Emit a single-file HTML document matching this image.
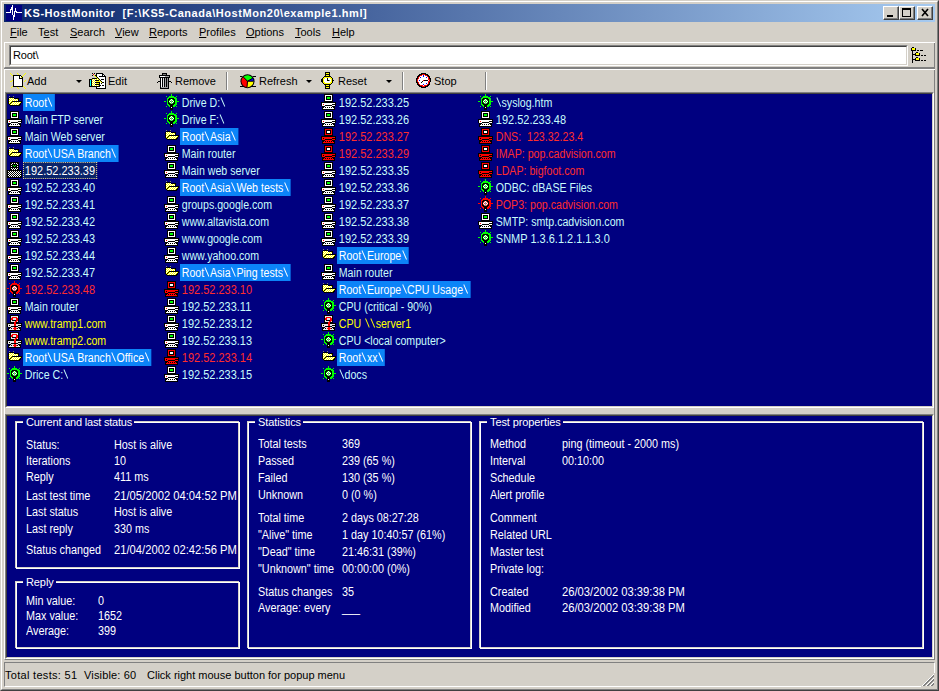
<!DOCTYPE html>
<html><head><meta charset="utf-8"><style>
*{margin:0;padding:0;box-sizing:border-box}
html,body{width:939px;height:691px;overflow:hidden;background:#D4D0C8;font-family:"Liberation Sans",sans-serif;font-size:11px;}
div{position:absolute}
svg{display:block}
.title{left:4px;top:4px;width:931px;height:18px;background:linear-gradient(to right,#0A246A,#A6CAF0)}
.ttext{left:24px;top:4px;height:18px;line-height:18px;color:#fff;font-weight:bold;font-size:11px;letter-spacing:0.55px;white-space:pre}
.cb{top:6px;width:16px;height:14px;background:#D4D0C8;border-top:1px solid #fff;border-left:1px solid #fff;border-right:1px solid #404040;border-bottom:1px solid #404040;box-shadow:inset -1px -1px 0 #808080}
.mi{top:23px;height:19px;line-height:19px;color:#000;white-space:pre;letter-spacing:0px}
.mi u{text-decoration:underline;text-underline-offset:1px}
.it{height:17px;line-height:18px;padding:0 2px;color:#C8FCFC;white-space:pre;letter-spacing:0px;font-size:12px;transform:scaleX(0.885);transform-origin:0 0}
.it svg.bs{display:inline;vertical-align:baseline}
.it.ip{transform:scaleX(0.915)}
.it.sel{background:#0C84F8;color:#fff}
.it.foc{color:#fff;background:#0A246A;outline:1px dotted #F0D898;outline-offset:-1px}
.it.red{color:#FF2C2C}
.it.yel{color:#FFFF00}
.gb1{border:1px solid #D4D0C8}
.gb2{border:1px solid #fff}
.gbt{background:#000080;color:#fff;padding:0 2px 0 3px;height:13px;line-height:13px;white-space:pre;letter-spacing:-0.1px}
.lt{color:#fff;white-space:pre;height:13px;line-height:14px;letter-spacing:0px;font-size:12px;transform:scaleX(0.9);transform-origin:0 0}
.lt.dt{transform:scaleX(0.935)}
.tb{top:70px;height:22px;line-height:22px;color:#000;white-space:pre;letter-spacing:0px}
.sep{top:72px;width:2px;height:18px;border-left:1px solid #808080;border-right:1px solid #fff}
.arr{top:80px;width:0;height:0;border-left:3px solid transparent;border-right:3px solid transparent;border-top:3px solid #000}
</style></head><body>
<div style="left:0;top:0;width:939px;height:691px;border-top:1px solid #D4D0C8;border-left:1px solid #D4D0C8;border-right:1px solid #404040;border-bottom:1px solid #404040"></div>
<div style="left:1px;top:1px;width:937px;height:689px;border-top:1px solid #fff;border-left:1px solid #fff;border-right:1px solid #808080;border-bottom:1px solid #808080"></div>
<div class="title"></div>
<div style="left:6px;top:5px"><svg width="16" height="16" viewBox="0 0 16 16" shape-rendering="crispEdges" style="display:block"><rect x="0" y="0" width="16" height="16" fill="#000080"/><rect x="0" y="7" width="5" height="1" fill="#FFF"/><rect x="4" y="4" width="1" height="4" fill="#FFF"/><rect x="5" y="2" width="1" height="3" fill="#FFF"/><rect x="6" y="0" width="1" height="10" fill="#FFF"/><rect x="7" y="10" width="1" height="5" fill="#FFF"/><rect x="8" y="6" width="1" height="6" fill="#FFF"/><rect x="9" y="3" width="1" height="4" fill="#FFF"/><rect x="10" y="6" width="1" height="2" fill="#FFF"/><rect x="11" y="7" width="5" height="1" fill="#FFF"/></svg></div>
<div class="ttext">KS-HostMonitor  [F:\KS5-Canada\HostMon20\example1.hml]</div>
<div class="cb" style="left:883px"><svg width="14" height="12" viewBox="0 0 14 12" shape-rendering="crispEdges" ><rect x="3" y="8" width="6" height="2" fill="#000"/></svg></div>
<div class="cb" style="left:899px"><svg width="14" height="12" viewBox="0 0 14 12" shape-rendering="crispEdges" ><rect x="2" y="1" width="9" height="9" fill="#000"/><rect x="3" y="3" width="7" height="6" fill="#D4D0C8"/></svg></div>
<div class="cb" style="left:917px"><svg width="14" height="12" viewBox="0 0 14 12" shape-rendering="crispEdges" ><path d="M4 2L10 9M10 2L4 9" stroke="#000" stroke-width="1.6" shape-rendering="auto"/></svg></div>
<div class="mi" style="left:10px"><u>F</u>ile</div><div class="mi" style="left:38px">T<u>e</u>st</div><div class="mi" style="left:70px"><u>S</u>earch</div><div class="mi" style="left:115px"><u>V</u>iew</div><div class="mi" style="left:149px"><u>R</u>eports</div><div class="mi" style="left:199px"><u>P</u>rofiles</div><div class="mi" style="left:246px"><u>O</u>ptions</div><div class="mi" style="left:295px"><u>T</u>ools</div><div class="mi" style="left:332px"><u>H</u>elp</div>
<div style="left:4px;top:42px;width:931px;height:618px;border-top:1px solid #fff;border-left:1px solid #fff;border-right:1px solid #808080;border-bottom:1px solid #808080"></div>
<!-- address band -->
<div style="left:4px;top:42px;width:931px;height:26px;border-top:1px solid #fff;border-left:1px solid #fff;border-bottom:1px solid #808080"></div>
<div style="left:9px;top:45px;width:899px;height:21px;border-top:1px solid #808080;border-left:1px solid #808080;border-right:1px solid #fff;border-bottom:1px solid #fff;background:#fff"></div>
<div style="left:10px;top:46px;width:897px;height:19px;border-top:1px solid #404040;border-left:1px solid #404040;border-right:1px solid #D4D0C8;border-bottom:1px solid #D4D0C8;background:#fff"></div>
<div style="left:13px;top:47px;height:17px;line-height:17px;color:#000;letter-spacing:-0.2px">Root\</div>
<div style="left:905px;top:44px"><svg width="24" height="24" viewBox="0 0 24 24" shape-rendering="crispEdges" style="display:block"><rect x="7" y="6" width="1" height="13" fill="#000"/><rect x="6" y="4" width="5" height="3" fill="#000"/><rect x="7" y="3" width="2" height="1" fill="#000"/><rect x="7" y="4" width="3" height="2" fill="#FFFF00"/><rect x="10" y="9" width="5" height="3" fill="#000"/><rect x="11" y="8" width="2" height="1" fill="#000"/><rect x="11" y="9" width="3" height="2" fill="#FFFF00"/><rect x="10" y="14" width="5" height="3" fill="#000"/><rect x="11" y="13" width="2" height="1" fill="#000"/><rect x="11" y="14" width="3" height="2" fill="#FFFF00"/><rect x="7" y="10" width="3" height="1" fill="#000"/><rect x="7" y="15" width="3" height="1" fill="#000"/><rect x="12" y="6" width="2" height="1" fill="#000"/><rect x="15" y="6" width="3" height="1" fill="#000"/><rect x="16" y="11" width="2" height="1" fill="#000"/><rect x="19" y="11" width="2" height="1" fill="#000"/><rect x="16" y="16" width="2" height="1" fill="#000"/><rect x="19" y="16" width="2" height="1" fill="#000"/></svg></div>
<!-- toolbar band -->
<div style="left:4px;top:68px;width:931px;height:1px;background:#808080"></div>
<div style="left:4px;top:69px;width:931px;height:23px;border-top:1px solid #fff;border-left:1px solid #fff"></div>
<div style="left:8px;top:70px"><svg width="20" height="20" viewBox="0 0 20 20" shape-rendering="crispEdges" style="display:block"><rect x="5" y="5" width="7" height="1" fill="#000"/><rect x="5" y="5" width="1" height="12" fill="#000"/><rect x="5" y="16" width="10" height="1" fill="#000"/><rect x="14" y="9" width="1" height="8" fill="#000"/><rect x="6" y="6" width="5" height="10" fill="#FFF"/><rect x="11" y="9" width="3" height="7" fill="#FFF"/><rect x="12" y="5" width="1" height="1" fill="#000"/><rect x="13" y="6" width="1" height="1" fill="#000"/><rect x="14" y="7" width="1" height="1" fill="#000"/><rect x="14" y="8" width="1" height="1" fill="#000"/><rect x="11" y="5" width="1" height="4" fill="#000"/><rect x="11" y="8" width="3" height="1" fill="#000"/><rect x="12" y="6" width="1" height="1" fill="#FFF"/><rect x="12" y="7" width="1" height="1" fill="#FFF"/><rect x="13" y="7" width="1" height="1" fill="#FFF"/><rect x="2" y="3" width="1" height="1" fill="#FFFF00"/><rect x="3" y="4" width="1" height="1" fill="#FFFF00"/><rect x="4" y="5" width="1" height="1" fill="#FFFF00"/><rect x="9" y="3" width="1" height="1" fill="#FFFF00"/><rect x="10" y="4" width="1" height="1" fill="#FFFF00"/><rect x="17" y="3" width="1" height="1" fill="#FFFF00"/><rect x="16" y="4" width="1" height="1" fill="#FFFF00"/><rect x="15" y="5" width="1" height="1" fill="#FFFF00"/><rect x="14" y="6" width="1" height="1" fill="#FFFF00"/><rect x="13" y="7" width="1" height="1" fill="#FFFF00"/><rect x="2" y="11" width="1" height="1" fill="#FFFF00"/><rect x="3" y="11" width="1" height="1" fill="#FFFF00"/><rect x="4" y="10" width="1" height="1" fill="#FFFF00"/><rect x="16" y="11" width="1" height="1" fill="#FFFF00"/><rect x="17" y="10" width="1" height="1" fill="#FFFF00"/><rect x="3" y="17" width="1" height="1" fill="#FFFF00"/><rect x="4" y="16" width="1" height="1" fill="#FFFF00"/><rect x="9" y="17" width="1" height="1" fill="#FFFF00"/><rect x="10" y="18" width="1" height="1" fill="#FFFF00"/><rect x="15" y="16" width="1" height="1" fill="#FFFF00"/><rect x="16" y="17" width="1" height="1" fill="#FFFF00"/><rect x="17" y="18" width="1" height="1" fill="#FFFF00"/></svg></div>
<div class="tb" style="left:27px">Add</div>
<div class="arr" style="left:76px"></div>
<div style="left:88px;top:70px"><svg width="20" height="20" viewBox="0 0 20 20" shape-rendering="crispEdges" style="display:block"><rect x="8" y="3" width="7" height="1" fill="#000"/><rect x="8" y="3" width="1" height="16" fill="#000"/><rect x="8" y="18" width="10" height="1" fill="#000"/><rect x="17" y="6" width="1" height="13" fill="#000"/><rect x="9" y="4" width="5" height="14" fill="#FFF"/><rect x="14" y="7" width="3" height="11" fill="#FFF"/><rect x="14" y="3" width="1" height="4" fill="#000"/><rect x="14" y="6" width="4" height="1" fill="#000"/><rect x="15" y="4" width="1" height="1" fill="#000"/><rect x="16" y="5" width="1" height="1" fill="#000"/><rect x="15" y="5" width="1" height="1" fill="#FFF"/><rect x="11" y="6" width="3" height="1" fill="#000"/><rect x="13" y="9" width="3" height="1" fill="#000"/><rect x="14" y="12" width="2" height="1" fill="#000"/><rect x="12" y="15" width="1" height="1" fill="#000"/><rect x="14" y="15" width="2" height="1" fill="#000"/><rect x="1" y="9" width="3" height="8" fill="#000"/><rect x="2" y="10" width="1" height="6" fill="#00FFFF"/><rect x="4" y="8" width="4" height="1" fill="#000"/><rect x="4" y="9" width="8" height="8" fill="#000"/><rect x="4" y="9" width="1" height="1" fill="#FFFF00"/><rect x="5" y="9" width="1" height="1" fill="#FFF"/><rect x="6" y="9" width="1" height="1" fill="#FFFF00"/><rect x="7" y="9" width="1" height="1" fill="#FFF"/><rect x="8" y="9" width="1" height="1" fill="#FFFF00"/><rect x="9" y="9" width="1" height="1" fill="#FFF"/><rect x="10" y="9" width="1" height="1" fill="#FFFF00"/><rect x="4" y="10" width="1" height="1" fill="#FFF"/><rect x="5" y="10" width="1" height="1" fill="#FFFF00"/><rect x="6" y="10" width="1" height="1" fill="#FFF"/><rect x="4" y="11" width="1" height="1" fill="#FFFF00"/><rect x="5" y="11" width="1" height="1" fill="#FFF"/><rect x="6" y="11" width="1" height="1" fill="#FFFF00"/><rect x="7" y="11" width="1" height="1" fill="#FFF"/><rect x="8" y="11" width="1" height="1" fill="#FFFF00"/><rect x="9" y="11" width="1" height="1" fill="#FFF"/><rect x="10" y="11" width="1" height="1" fill="#FFFF00"/><rect x="4" y="12" width="1" height="1" fill="#FFF"/><rect x="5" y="12" width="1" height="1" fill="#FFFF00"/><rect x="6" y="12" width="1" height="1" fill="#FFF"/><rect x="4" y="13" width="1" height="1" fill="#FFFF00"/><rect x="5" y="13" width="1" height="1" fill="#FFF"/><rect x="6" y="13" width="1" height="1" fill="#FFFF00"/><rect x="7" y="13" width="1" height="1" fill="#FFF"/><rect x="8" y="13" width="1" height="1" fill="#FFFF00"/><rect x="9" y="13" width="1" height="1" fill="#FFF"/><rect x="10" y="13" width="1" height="1" fill="#FFFF00"/><rect x="4" y="14" width="1" height="1" fill="#FFF"/><rect x="5" y="14" width="1" height="1" fill="#FFFF00"/><rect x="6" y="14" width="1" height="1" fill="#FFF"/><rect x="4" y="15" width="1" height="1" fill="#FFFF00"/><rect x="5" y="15" width="1" height="1" fill="#FFF"/><rect x="6" y="15" width="1" height="1" fill="#FFFF00"/><rect x="7" y="15" width="1" height="1" fill="#FFF"/><rect x="8" y="15" width="1" height="1" fill="#FFFF00"/><rect x="9" y="15" width="1" height="1" fill="#FFF"/><rect x="10" y="15" width="1" height="1" fill="#FFFF00"/><rect x="8" y="11" width="1" height="1" fill="#FFFF00"/><rect x="9" y="11" width="1" height="1" fill="#FFFF00"/><rect x="10" y="11" width="1" height="1" fill="#FFFF00"/><rect x="11" y="11" width="1" height="1" fill="#FFFF00"/><rect x="8" y="13" width="1" height="1" fill="#FFFF00"/><rect x="9" y="13" width="1" height="1" fill="#FFFF00"/><rect x="10" y="13" width="1" height="1" fill="#FFFF00"/><rect x="4" y="3" width="1" height="1" fill="#000"/><rect x="6" y="3" width="1" height="1" fill="#000"/><rect x="4" y="5" width="1" height="1" fill="#000"/><rect x="5" y="4" width="1" height="1" fill="#FF0000"/><rect x="6" y="5" width="1" height="1" fill="#FFFF00"/><rect x="7" y="6" width="1" height="1" fill="#FFFF00"/><rect x="8" y="7" width="1" height="1" fill="#FFFF00"/><rect x="9" y="8" width="1" height="1" fill="#FFFF00"/><rect x="10" y="9" width="1" height="1" fill="#FFFF00"/><rect x="11" y="10" width="1" height="1" fill="#FFFF00"/><rect x="12" y="11" width="1" height="1" fill="#FFFF00"/><rect x="13" y="12" width="1" height="1" fill="#FFFF00"/><rect x="7" y="5" width="1" height="1" fill="#000"/><rect x="8" y="6" width="1" height="1" fill="#000"/><rect x="9" y="7" width="1" height="1" fill="#000"/><rect x="10" y="8" width="1" height="1" fill="#000"/><rect x="11" y="9" width="1" height="1" fill="#000"/><rect x="12" y="10" width="1" height="1" fill="#000"/><rect x="13" y="11" width="1" height="1" fill="#000"/><rect x="14" y="12" width="1" height="1" fill="#000"/><rect x="13" y="13" width="1" height="1" fill="#000"/></svg></div>
<div class="tb" style="left:108px">Edit</div>
<div style="left:155px;top:70px"><svg width="20" height="20" viewBox="0 0 20 20" shape-rendering="crispEdges" style="display:block"><rect x="7" y="3" width="5" height="3" fill="#000"/><rect x="8" y="4" width="3" height="1" fill="#808080"/><rect x="4" y="5" width="11" height="3" fill="#000"/><rect x="5" y="6" width="5" height="1" fill="#FFF"/><rect x="10" y="6" width="4" height="1" fill="#A0A0A0"/><rect x="5" y="8" width="9" height="11" fill="#000"/><rect x="6" y="8" width="1" height="9" fill="#FFF"/><rect x="8" y="8" width="1" height="9" fill="#E0E0E0"/><rect x="10" y="8" width="1" height="9" fill="#A0A0A0"/><rect x="12" y="8" width="1" height="9" fill="#909090"/><rect x="6" y="17" width="7" height="1" fill="#A0A0A0"/><rect x="3" y="11" width="2" height="1" fill="#000"/><rect x="14" y="11" width="2" height="1" fill="#000"/><rect x="2" y="12" width="1" height="1" fill="#000"/><rect x="16" y="12" width="1" height="1" fill="#000"/></svg></div>
<div class="tb" style="left:175px">Remove</div>
<div class="sep" style="left:226px"></div>
<div style="left:238px;top:70px"><svg width="20" height="20" viewBox="0 0 20 20" shape-rendering="crispEdges" style="display:block"><g shape-rendering="auto"><circle cx="9.5" cy="11.2" r="7.0" fill="#000"/><path d="M9.5 11.2L5.26 6.96A6.0 6.0 0 0 1 14.70 8.20Z" fill="#00FF00"/><path d="M9.5 11.2L14.70 8.20A6.0 6.0 0 0 1 15.50 11.20Z" fill="#0000FF"/><path d="M9.5 11.2L15.50 11.20A6.0 6.0 0 0 1 8.98 17.18Z" fill="#FFFF00"/><path d="M9.5 11.2L8.98 17.18A6.0 6.0 0 0 1 5.26 6.96Z" fill="#FF0000"/><path d="M9.5 11.2L5.26 6.96M9.5 11.2L14.70 8.20M9.5 11.2L15.5 11.2M9.5 11.2L8.98 17.18" stroke="#000" stroke-width="1"/></g><rect x="2" y="6" width="2" height="1" fill="#000"/><rect x="15" y="6" width="3" height="1" fill="#000"/><rect x="2" y="16" width="3" height="1" fill="#000"/><rect x="14" y="16" width="4" height="1" fill="#000"/></svg></div>
<div class="tb" style="left:259px">Refresh</div>
<div class="arr" style="left:306px"></div>
<div style="left:318px;top:70px"><svg width="20" height="20" viewBox="0 0 20 20" shape-rendering="crispEdges" style="display:block"><rect x="7" y="2" width="5" height="5" fill="#000"/><rect x="8" y="3" width="3" height="1" fill="#FFFF00"/><rect x="8" y="5" width="3" height="1" fill="#FFFF00"/><rect x="7" y="14" width="5" height="5" fill="#000"/><rect x="8" y="15" width="3" height="1" fill="#FFFF00"/><rect x="8" y="17" width="3" height="1" fill="#FFFF00"/><rect x="6" y="6" width="7" height="1" fill="#000"/><rect x="5" y="7" width="9" height="1" fill="#000"/><rect x="4" y="8" width="11" height="5" fill="#000"/><rect x="5" y="13" width="9" height="1" fill="#000"/><rect x="6" y="14" width="7" height="1" fill="#000"/><rect x="6" y="7" width="7" height="1" fill="#FFFF00"/><rect x="5" y="8" width="9" height="5" fill="#FFFF00"/><rect x="6" y="13" width="7" height="1" fill="#FFFF00"/><rect x="7" y="8" width="5" height="5" fill="#FFF"/><rect x="6" y="9" width="7" height="3" fill="#FFF"/><rect x="9" y="8" width="1" height="3" fill="#000"/><rect x="10" y="10" width="1" height="1" fill="#000"/><rect x="11" y="10" width="1" height="1" fill="#808080"/><rect x="14" y="10" width="2" height="1" fill="#000"/><rect x="3" y="9" width="1" height="3" fill="#000"/></svg></div>
<div class="tb" style="left:338px">Reset</div>
<div class="arr" style="left:386px"></div>
<div class="sep" style="left:402px"></div>
<div style="left:413px;top:70px"><svg width="20" height="20" viewBox="0 0 20 20" shape-rendering="crispEdges" style="display:block"><circle cx="10.5" cy="10.5" r="7.4" fill="#000"/><circle cx="10.5" cy="10.5" r="6.3" fill="#FF0000"/><circle cx="10.5" cy="10.5" r="5.2" fill="#FFF"/><rect x="10" y="5" width="1" height="2" fill="#0000FF"/><rect x="13" y="7" width="1" height="1" fill="#0000FF"/><rect x="7" y="7" width="1" height="1" fill="#0000FF"/><rect x="6" y="10" width="1" height="1" fill="#0000FF"/><rect x="10" y="14" width="1" height="1" fill="#0000FF"/><rect x="13" y="13" width="1" height="1" fill="#0000FF"/><rect x="11" y="10" width="4" height="1" fill="#000"/><rect x="10" y="10" width="1" height="1" fill="#FF0000"/><rect x="9" y="11" width="1" height="1" fill="#000"/><rect x="8" y="12" width="1" height="1" fill="#000"/></svg></div>
<div class="tb" style="left:434px">Stop</div>
<div class="sep" style="left:485px"></div>
<!-- main list -->
<div style="left:5px;top:92px;width:929px;height:316px;border-top:1px solid #808080;border-left:1px solid #808080;border-right:1px solid #fff;border-bottom:1px solid #fff"></div>
<div style="left:6px;top:93px;width:927px;height:314px;border-top:1px solid #404040;border-left:1px solid #404040;border-right:1px solid #D4D0C8;border-bottom:1px solid #D4D0C8;background:#000080"></div>
<div class="ic" style="left:7px;top:94px"><svg width="16" height="16" viewBox="0 0 16 16" shape-rendering="crispEdges" ><rect x="2" y="2" width="1" height="1" fill="#808080"/><rect x="6" y="2" width="1" height="1" fill="#808080"/><rect x="2" y="3" width="5" height="1" fill="#000"/><rect x="1" y="4" width="11" height="1" fill="#000"/><rect x="1" y="5" width="11" height="1" fill="#000"/><rect x="1" y="6" width="11" height="1" fill="#000"/><rect x="1" y="7" width="14" height="1" fill="#000"/><rect x="1" y="8" width="14" height="1" fill="#000"/><rect x="1" y="9" width="13" height="1" fill="#000"/><rect x="2" y="10" width="12" height="1" fill="#000"/><rect x="3" y="11" width="10" height="1" fill="#000"/><rect x="2" y="4" width="1" height="1" fill="#FFFFFF"/><rect x="3" y="4" width="1" height="1" fill="#FFFF00"/><rect x="4" y="4" width="1" height="1" fill="#FFFFFF"/><rect x="5" y="4" width="1" height="1" fill="#FFFF00"/><rect x="6" y="4" width="1" height="1" fill="#FFFFFF"/><rect x="2" y="5" width="1" height="1" fill="#FFFF00"/><rect x="3" y="5" width="1" height="1" fill="#FFFFFF"/><rect x="4" y="5" width="1" height="1" fill="#FFFF00"/><rect x="5" y="5" width="1" height="1" fill="#FFFFFF"/><rect x="6" y="5" width="1" height="1" fill="#FFFF00"/><rect x="7" y="5" width="1" height="1" fill="#FFFFFF"/><rect x="8" y="5" width="1" height="1" fill="#FFFF00"/><rect x="9" y="5" width="1" height="1" fill="#FFFFFF"/><rect x="10" y="5" width="1" height="1" fill="#FFFF00"/><rect x="2" y="6" width="1" height="1" fill="#FFFFFF"/><rect x="3" y="6" width="1" height="1" fill="#FFFF00"/><rect x="4" y="6" width="1" height="1" fill="#FFFFFF"/><rect x="5" y="6" width="1" height="1" fill="#FFFF00"/><rect x="6" y="6" width="1" height="1" fill="#FFFFFF"/><rect x="7" y="6" width="1" height="1" fill="#FFFF00"/><rect x="8" y="6" width="1" height="1" fill="#FFFFFF"/><rect x="9" y="6" width="1" height="1" fill="#FFFF00"/><rect x="10" y="6" width="1" height="1" fill="#FFFFFF"/><rect x="2" y="7" width="1" height="1" fill="#FFFF00"/><rect x="3" y="7" width="1" height="1" fill="#FFFFFF"/><rect x="4" y="7" width="1" height="1" fill="#FFFF00"/><rect x="2" y="8" width="1" height="1" fill="#FFFFFF"/><rect x="3" y="8" width="1" height="1" fill="#FFFF00"/><rect x="2" y="9" width="1" height="1" fill="#FFFF00"/><rect x="5" y="8" width="1" height="1" fill="#FFFF00"/><rect x="6" y="8" width="1" height="1" fill="#FFFFFF"/><rect x="7" y="8" width="1" height="1" fill="#FFFF00"/><rect x="8" y="8" width="1" height="1" fill="#FFFFFF"/><rect x="9" y="8" width="1" height="1" fill="#FFFF00"/><rect x="10" y="8" width="1" height="1" fill="#FFFFFF"/><rect x="11" y="8" width="1" height="1" fill="#FFFF00"/><rect x="12" y="8" width="1" height="1" fill="#FFFFFF"/><rect x="13" y="8" width="1" height="1" fill="#FFFF00"/><rect x="4" y="9" width="1" height="1" fill="#FFFF00"/><rect x="5" y="9" width="1" height="1" fill="#FFFFFF"/><rect x="6" y="9" width="1" height="1" fill="#FFFF00"/><rect x="7" y="9" width="1" height="1" fill="#FFFFFF"/><rect x="8" y="9" width="1" height="1" fill="#FFFF00"/><rect x="9" y="9" width="1" height="1" fill="#FFFFFF"/><rect x="10" y="9" width="1" height="1" fill="#FFFF00"/><rect x="11" y="9" width="1" height="1" fill="#FFFFFF"/><rect x="12" y="9" width="1" height="1" fill="#FFFF00"/><rect x="3" y="10" width="1" height="1" fill="#FFFF00"/><rect x="4" y="10" width="1" height="1" fill="#FFFFFF"/><rect x="5" y="10" width="1" height="1" fill="#FFFF00"/><rect x="6" y="10" width="1" height="1" fill="#FFFFFF"/><rect x="7" y="10" width="1" height="1" fill="#FFFF00"/><rect x="8" y="10" width="1" height="1" fill="#FFFFFF"/><rect x="9" y="10" width="1" height="1" fill="#FFFF00"/><rect x="10" y="10" width="1" height="1" fill="#FFFFFF"/><rect x="11" y="10" width="1" height="1" fill="#FFFF00"/></svg></div><div class="it sel" style="left:23px;top:94px">Root<svg class="bs" width="6.5" height="10" viewBox="0 0 6.5 10"><path d="M1.2 0.6L5.6 9.4" stroke="currentColor" stroke-width="1.05" fill="none"/></svg></div><div class="ic" style="left:7px;top:111px"><svg width="16" height="16" viewBox="0 0 16 16" shape-rendering="crispEdges" ><rect x="3" y="0" width="9" height="9" fill="#000"/><rect x="4" y="1" width="7" height="6" fill="#FFFFFF"/><rect x="5" y="2" width="5" height="4" fill="#000"/><rect x="6" y="3" width="3" height="2" fill="#00FF00"/><rect x="0" y="8" width="15" height="4" fill="#000"/><rect x="1" y="12" width="13" height="4" fill="#000"/><rect x="1" y="9" width="13" height="3" fill="#FFFFFF"/><rect x="4" y="11" width="7" height="1" fill="#000"/><rect x="11" y="10" width="3" height="1" fill="#000"/><rect x="2" y="10" width="1" height="1" fill="#F00"/><rect x="4" y="12" width="7" height="1" fill="#FFFFFF"/><rect x="3" y="13" width="9" height="1" fill="#FFFFFF"/><rect x="2" y="14" width="11" height="1" fill="#FFFFFF"/><rect x="4" y="13" width="1" height="1" fill="#000"/><rect x="6" y="13" width="1" height="1" fill="#000"/><rect x="8" y="13" width="1" height="1" fill="#000"/><rect x="10" y="13" width="1" height="1" fill="#000"/></svg></div><div class="it" style="left:23px;top:111px">Main FTP server</div><div class="ic" style="left:7px;top:128px"><svg width="16" height="16" viewBox="0 0 16 16" shape-rendering="crispEdges" ><rect x="3" y="0" width="9" height="9" fill="#000"/><rect x="4" y="1" width="7" height="6" fill="#FFFFFF"/><rect x="5" y="2" width="5" height="4" fill="#000"/><rect x="6" y="3" width="3" height="2" fill="#00FF00"/><rect x="0" y="8" width="15" height="4" fill="#000"/><rect x="1" y="12" width="13" height="4" fill="#000"/><rect x="1" y="9" width="13" height="3" fill="#FFFFFF"/><rect x="4" y="11" width="7" height="1" fill="#000"/><rect x="11" y="10" width="3" height="1" fill="#000"/><rect x="2" y="10" width="1" height="1" fill="#F00"/><rect x="4" y="12" width="7" height="1" fill="#FFFFFF"/><rect x="3" y="13" width="9" height="1" fill="#FFFFFF"/><rect x="2" y="14" width="11" height="1" fill="#FFFFFF"/><rect x="4" y="13" width="1" height="1" fill="#000"/><rect x="6" y="13" width="1" height="1" fill="#000"/><rect x="8" y="13" width="1" height="1" fill="#000"/><rect x="10" y="13" width="1" height="1" fill="#000"/></svg></div><div class="it" style="left:23px;top:128px">Main Web server</div><div class="ic" style="left:7px;top:145px"><svg width="16" height="16" viewBox="0 0 16 16" shape-rendering="crispEdges" ><rect x="2" y="2" width="1" height="1" fill="#808080"/><rect x="6" y="2" width="1" height="1" fill="#808080"/><rect x="2" y="3" width="5" height="1" fill="#000"/><rect x="1" y="4" width="11" height="1" fill="#000"/><rect x="1" y="5" width="11" height="1" fill="#000"/><rect x="1" y="6" width="11" height="1" fill="#000"/><rect x="1" y="7" width="14" height="1" fill="#000"/><rect x="1" y="8" width="14" height="1" fill="#000"/><rect x="1" y="9" width="13" height="1" fill="#000"/><rect x="2" y="10" width="12" height="1" fill="#000"/><rect x="3" y="11" width="10" height="1" fill="#000"/><rect x="2" y="4" width="1" height="1" fill="#FFFFFF"/><rect x="3" y="4" width="1" height="1" fill="#FFFF00"/><rect x="4" y="4" width="1" height="1" fill="#FFFFFF"/><rect x="5" y="4" width="1" height="1" fill="#FFFF00"/><rect x="6" y="4" width="1" height="1" fill="#FFFFFF"/><rect x="2" y="5" width="1" height="1" fill="#FFFF00"/><rect x="3" y="5" width="1" height="1" fill="#FFFFFF"/><rect x="4" y="5" width="1" height="1" fill="#FFFF00"/><rect x="5" y="5" width="1" height="1" fill="#FFFFFF"/><rect x="6" y="5" width="1" height="1" fill="#FFFF00"/><rect x="7" y="5" width="1" height="1" fill="#FFFFFF"/><rect x="8" y="5" width="1" height="1" fill="#FFFF00"/><rect x="9" y="5" width="1" height="1" fill="#FFFFFF"/><rect x="10" y="5" width="1" height="1" fill="#FFFF00"/><rect x="2" y="6" width="1" height="1" fill="#FFFFFF"/><rect x="3" y="6" width="1" height="1" fill="#FFFF00"/><rect x="4" y="6" width="1" height="1" fill="#FFFFFF"/><rect x="5" y="6" width="1" height="1" fill="#FFFF00"/><rect x="6" y="6" width="1" height="1" fill="#FFFFFF"/><rect x="7" y="6" width="1" height="1" fill="#FFFF00"/><rect x="8" y="6" width="1" height="1" fill="#FFFFFF"/><rect x="9" y="6" width="1" height="1" fill="#FFFF00"/><rect x="10" y="6" width="1" height="1" fill="#FFFFFF"/><rect x="2" y="7" width="1" height="1" fill="#FFFF00"/><rect x="3" y="7" width="1" height="1" fill="#FFFFFF"/><rect x="4" y="7" width="1" height="1" fill="#FFFF00"/><rect x="2" y="8" width="1" height="1" fill="#FFFFFF"/><rect x="3" y="8" width="1" height="1" fill="#FFFF00"/><rect x="2" y="9" width="1" height="1" fill="#FFFF00"/><rect x="5" y="8" width="1" height="1" fill="#FFFF00"/><rect x="6" y="8" width="1" height="1" fill="#FFFFFF"/><rect x="7" y="8" width="1" height="1" fill="#FFFF00"/><rect x="8" y="8" width="1" height="1" fill="#FFFFFF"/><rect x="9" y="8" width="1" height="1" fill="#FFFF00"/><rect x="10" y="8" width="1" height="1" fill="#FFFFFF"/><rect x="11" y="8" width="1" height="1" fill="#FFFF00"/><rect x="12" y="8" width="1" height="1" fill="#FFFFFF"/><rect x="13" y="8" width="1" height="1" fill="#FFFF00"/><rect x="4" y="9" width="1" height="1" fill="#FFFF00"/><rect x="5" y="9" width="1" height="1" fill="#FFFFFF"/><rect x="6" y="9" width="1" height="1" fill="#FFFF00"/><rect x="7" y="9" width="1" height="1" fill="#FFFFFF"/><rect x="8" y="9" width="1" height="1" fill="#FFFF00"/><rect x="9" y="9" width="1" height="1" fill="#FFFFFF"/><rect x="10" y="9" width="1" height="1" fill="#FFFF00"/><rect x="11" y="9" width="1" height="1" fill="#FFFFFF"/><rect x="12" y="9" width="1" height="1" fill="#FFFF00"/><rect x="3" y="10" width="1" height="1" fill="#FFFF00"/><rect x="4" y="10" width="1" height="1" fill="#FFFFFF"/><rect x="5" y="10" width="1" height="1" fill="#FFFF00"/><rect x="6" y="10" width="1" height="1" fill="#FFFFFF"/><rect x="7" y="10" width="1" height="1" fill="#FFFF00"/><rect x="8" y="10" width="1" height="1" fill="#FFFFFF"/><rect x="9" y="10" width="1" height="1" fill="#FFFF00"/><rect x="10" y="10" width="1" height="1" fill="#FFFFFF"/><rect x="11" y="10" width="1" height="1" fill="#FFFF00"/></svg></div><div class="it sel" style="left:23px;top:145px">Root<svg class="bs" width="6.5" height="10" viewBox="0 0 6.5 10"><path d="M1.2 0.6L5.6 9.4" stroke="currentColor" stroke-width="1.05" fill="none"/></svg>USA Branch<svg class="bs" width="6.5" height="10" viewBox="0 0 6.5 10"><path d="M1.2 0.6L5.6 9.4" stroke="currentColor" stroke-width="1.05" fill="none"/></svg></div><div class="ic" style="left:7px;top:162px"><svg width="16" height="16" viewBox="0 0 16 16" shape-rendering="crispEdges" ><rect x="3" y="0" width="9" height="8" fill="#000"/><rect x="0" y="8" width="15" height="8" fill="#000"/><rect x="5" y="1" width="1" height="1" fill="#FFF"/><rect x="7" y="1" width="1" height="1" fill="#FFF"/><rect x="9" y="1" width="1" height="1" fill="#FFF"/><rect x="4" y="2" width="1" height="1" fill="#FFF"/><rect x="10" y="2" width="1" height="1" fill="#FFF"/><rect x="4" y="4" width="1" height="1" fill="#FFF"/><rect x="10" y="4" width="1" height="1" fill="#FFF"/><rect x="4" y="6" width="1" height="1" fill="#FFF"/><rect x="6" y="6" width="1" height="1" fill="#FFF"/><rect x="8" y="6" width="1" height="1" fill="#FFF"/><rect x="10" y="6" width="1" height="1" fill="#FFF"/><rect x="5" y="7" width="1" height="1" fill="#FFF"/><rect x="7" y="7" width="1" height="1" fill="#FFF"/><rect x="9" y="7" width="1" height="1" fill="#FFF"/><rect x="1" y="9" width="1" height="1" fill="#FFF"/><rect x="3" y="9" width="1" height="1" fill="#FFF"/><rect x="5" y="9" width="1" height="1" fill="#FFF"/><rect x="7" y="9" width="1" height="1" fill="#FFF"/><rect x="9" y="9" width="1" height="1" fill="#FFF"/><rect x="11" y="9" width="1" height="1" fill="#FFF"/><rect x="13" y="9" width="1" height="1" fill="#FFF"/><rect x="2" y="10" width="1" height="1" fill="#FFF"/><rect x="4" y="10" width="1" height="1" fill="#FFF"/><rect x="6" y="10" width="1" height="1" fill="#FFF"/><rect x="8" y="10" width="1" height="1" fill="#FFF"/><rect x="10" y="10" width="1" height="1" fill="#FFF"/><rect x="12" y="10" width="1" height="1" fill="#FFF"/><rect x="1" y="11" width="1" height="1" fill="#FFF"/><rect x="3" y="11" width="1" height="1" fill="#FFF"/><rect x="5" y="11" width="1" height="1" fill="#FFF"/><rect x="7" y="11" width="1" height="1" fill="#FFF"/><rect x="9" y="11" width="1" height="1" fill="#FFF"/><rect x="11" y="11" width="1" height="1" fill="#FFF"/><rect x="13" y="11" width="1" height="1" fill="#FFF"/><rect x="2" y="12" width="1" height="1" fill="#FFF"/><rect x="4" y="12" width="1" height="1" fill="#FFF"/><rect x="6" y="12" width="1" height="1" fill="#FFF"/><rect x="8" y="12" width="1" height="1" fill="#FFF"/><rect x="10" y="12" width="1" height="1" fill="#FFF"/><rect x="12" y="12" width="1" height="1" fill="#FFF"/><rect x="1" y="13" width="1" height="1" fill="#FFF"/><rect x="3" y="13" width="1" height="1" fill="#FFF"/><rect x="5" y="13" width="1" height="1" fill="#FFF"/><rect x="7" y="13" width="1" height="1" fill="#FFF"/><rect x="9" y="13" width="1" height="1" fill="#FFF"/><rect x="11" y="13" width="1" height="1" fill="#FFF"/><rect x="13" y="13" width="1" height="1" fill="#FFF"/><rect x="2" y="14" width="1" height="1" fill="#FFF"/><rect x="4" y="14" width="1" height="1" fill="#FFF"/><rect x="6" y="14" width="1" height="1" fill="#FFF"/><rect x="8" y="14" width="1" height="1" fill="#FFF"/><rect x="10" y="14" width="1" height="1" fill="#FFF"/><rect x="12" y="14" width="1" height="1" fill="#FFF"/><rect x="6" y="3" width="1" height="1" fill="#0F0"/><rect x="8" y="3" width="1" height="1" fill="#0F0"/><rect x="7" y="4" width="1" height="1" fill="#0F0"/></svg></div><div class="it foc ip" style="left:23px;top:162px">192.52.233.39</div><div class="ic" style="left:7px;top:179px"><svg width="16" height="16" viewBox="0 0 16 16" shape-rendering="crispEdges" ><rect x="3" y="0" width="9" height="9" fill="#000"/><rect x="4" y="1" width="7" height="6" fill="#FFFFFF"/><rect x="5" y="2" width="5" height="4" fill="#000"/><rect x="6" y="3" width="3" height="2" fill="#00FF00"/><rect x="0" y="8" width="15" height="4" fill="#000"/><rect x="1" y="12" width="13" height="4" fill="#000"/><rect x="1" y="9" width="13" height="3" fill="#FFFFFF"/><rect x="4" y="11" width="7" height="1" fill="#000"/><rect x="11" y="10" width="3" height="1" fill="#000"/><rect x="2" y="10" width="1" height="1" fill="#F00"/><rect x="4" y="12" width="7" height="1" fill="#FFFFFF"/><rect x="3" y="13" width="9" height="1" fill="#FFFFFF"/><rect x="2" y="14" width="11" height="1" fill="#FFFFFF"/><rect x="4" y="13" width="1" height="1" fill="#000"/><rect x="6" y="13" width="1" height="1" fill="#000"/><rect x="8" y="13" width="1" height="1" fill="#000"/><rect x="10" y="13" width="1" height="1" fill="#000"/></svg></div><div class="it ip" style="left:23px;top:179px">192.52.233.40</div><div class="ic" style="left:7px;top:196px"><svg width="16" height="16" viewBox="0 0 16 16" shape-rendering="crispEdges" ><rect x="3" y="0" width="9" height="9" fill="#000"/><rect x="4" y="1" width="7" height="6" fill="#FFFFFF"/><rect x="5" y="2" width="5" height="4" fill="#000"/><rect x="6" y="3" width="3" height="2" fill="#00FF00"/><rect x="0" y="8" width="15" height="4" fill="#000"/><rect x="1" y="12" width="13" height="4" fill="#000"/><rect x="1" y="9" width="13" height="3" fill="#FFFFFF"/><rect x="4" y="11" width="7" height="1" fill="#000"/><rect x="11" y="10" width="3" height="1" fill="#000"/><rect x="2" y="10" width="1" height="1" fill="#F00"/><rect x="4" y="12" width="7" height="1" fill="#FFFFFF"/><rect x="3" y="13" width="9" height="1" fill="#FFFFFF"/><rect x="2" y="14" width="11" height="1" fill="#FFFFFF"/><rect x="4" y="13" width="1" height="1" fill="#000"/><rect x="6" y="13" width="1" height="1" fill="#000"/><rect x="8" y="13" width="1" height="1" fill="#000"/><rect x="10" y="13" width="1" height="1" fill="#000"/></svg></div><div class="it ip" style="left:23px;top:196px">192.52.233.41</div><div class="ic" style="left:7px;top:213px"><svg width="16" height="16" viewBox="0 0 16 16" shape-rendering="crispEdges" ><rect x="3" y="0" width="9" height="9" fill="#000"/><rect x="4" y="1" width="7" height="6" fill="#FFFFFF"/><rect x="5" y="2" width="5" height="4" fill="#000"/><rect x="6" y="3" width="3" height="2" fill="#00FF00"/><rect x="0" y="8" width="15" height="4" fill="#000"/><rect x="1" y="12" width="13" height="4" fill="#000"/><rect x="1" y="9" width="13" height="3" fill="#FFFFFF"/><rect x="4" y="11" width="7" height="1" fill="#000"/><rect x="11" y="10" width="3" height="1" fill="#000"/><rect x="2" y="10" width="1" height="1" fill="#F00"/><rect x="4" y="12" width="7" height="1" fill="#FFFFFF"/><rect x="3" y="13" width="9" height="1" fill="#FFFFFF"/><rect x="2" y="14" width="11" height="1" fill="#FFFFFF"/><rect x="4" y="13" width="1" height="1" fill="#000"/><rect x="6" y="13" width="1" height="1" fill="#000"/><rect x="8" y="13" width="1" height="1" fill="#000"/><rect x="10" y="13" width="1" height="1" fill="#000"/></svg></div><div class="it ip" style="left:23px;top:213px">192.52.233.42</div><div class="ic" style="left:7px;top:230px"><svg width="16" height="16" viewBox="0 0 16 16" shape-rendering="crispEdges" ><rect x="3" y="0" width="9" height="9" fill="#000"/><rect x="4" y="1" width="7" height="6" fill="#FFFFFF"/><rect x="5" y="2" width="5" height="4" fill="#000"/><rect x="6" y="3" width="3" height="2" fill="#00FF00"/><rect x="0" y="8" width="15" height="4" fill="#000"/><rect x="1" y="12" width="13" height="4" fill="#000"/><rect x="1" y="9" width="13" height="3" fill="#FFFFFF"/><rect x="4" y="11" width="7" height="1" fill="#000"/><rect x="11" y="10" width="3" height="1" fill="#000"/><rect x="2" y="10" width="1" height="1" fill="#F00"/><rect x="4" y="12" width="7" height="1" fill="#FFFFFF"/><rect x="3" y="13" width="9" height="1" fill="#FFFFFF"/><rect x="2" y="14" width="11" height="1" fill="#FFFFFF"/><rect x="4" y="13" width="1" height="1" fill="#000"/><rect x="6" y="13" width="1" height="1" fill="#000"/><rect x="8" y="13" width="1" height="1" fill="#000"/><rect x="10" y="13" width="1" height="1" fill="#000"/></svg></div><div class="it ip" style="left:23px;top:230px">192.52.233.43</div><div class="ic" style="left:7px;top:247px"><svg width="16" height="16" viewBox="0 0 16 16" shape-rendering="crispEdges" ><rect x="3" y="0" width="9" height="9" fill="#000"/><rect x="4" y="1" width="7" height="6" fill="#FFFFFF"/><rect x="5" y="2" width="5" height="4" fill="#000"/><rect x="6" y="3" width="3" height="2" fill="#00FF00"/><rect x="0" y="8" width="15" height="4" fill="#000"/><rect x="1" y="12" width="13" height="4" fill="#000"/><rect x="1" y="9" width="13" height="3" fill="#FFFFFF"/><rect x="4" y="11" width="7" height="1" fill="#000"/><rect x="11" y="10" width="3" height="1" fill="#000"/><rect x="2" y="10" width="1" height="1" fill="#F00"/><rect x="4" y="12" width="7" height="1" fill="#FFFFFF"/><rect x="3" y="13" width="9" height="1" fill="#FFFFFF"/><rect x="2" y="14" width="11" height="1" fill="#FFFFFF"/><rect x="4" y="13" width="1" height="1" fill="#000"/><rect x="6" y="13" width="1" height="1" fill="#000"/><rect x="8" y="13" width="1" height="1" fill="#000"/><rect x="10" y="13" width="1" height="1" fill="#000"/></svg></div><div class="it ip" style="left:23px;top:247px">192.52.233.44</div><div class="ic" style="left:7px;top:264px"><svg width="16" height="16" viewBox="0 0 16 16" shape-rendering="crispEdges" ><rect x="3" y="0" width="9" height="9" fill="#000"/><rect x="4" y="1" width="7" height="6" fill="#FFFFFF"/><rect x="5" y="2" width="5" height="4" fill="#000"/><rect x="6" y="3" width="3" height="2" fill="#00FF00"/><rect x="0" y="8" width="15" height="4" fill="#000"/><rect x="1" y="12" width="13" height="4" fill="#000"/><rect x="1" y="9" width="13" height="3" fill="#FFFFFF"/><rect x="4" y="11" width="7" height="1" fill="#000"/><rect x="11" y="10" width="3" height="1" fill="#000"/><rect x="2" y="10" width="1" height="1" fill="#F00"/><rect x="4" y="12" width="7" height="1" fill="#FFFFFF"/><rect x="3" y="13" width="9" height="1" fill="#FFFFFF"/><rect x="2" y="14" width="11" height="1" fill="#FFFFFF"/><rect x="4" y="13" width="1" height="1" fill="#000"/><rect x="6" y="13" width="1" height="1" fill="#000"/><rect x="8" y="13" width="1" height="1" fill="#000"/><rect x="10" y="13" width="1" height="1" fill="#000"/></svg></div><div class="it ip" style="left:23px;top:264px">192.52.233.47</div><div class="ic" style="left:7px;top:281px"><svg width="16" height="16" viewBox="0 0 16 16" shape-rendering="crispEdges" ><rect x="7" y="0" width="1" height="2" fill="#FF0000"/><rect x="0" y="7" width="2" height="1" fill="#FF0000"/><rect x="13" y="7" width="2" height="1" fill="#FF0000"/><rect x="2" y="2" width="1" height="1" fill="#FF0000"/><rect x="12" y="2" width="1" height="1" fill="#FF0000"/><rect x="2" y="12" width="1" height="1" fill="#FF0000"/><rect x="12" y="12" width="1" height="1" fill="#FF0000"/><rect x="5" y="2" width="5" height="1" fill="#FF0000"/><rect x="4" y="3" width="8" height="1" fill="#FF0000"/><rect x="3" y="4" width="10" height="7" fill="#FF0000"/><rect x="4" y="11" width="8" height="1" fill="#FF0000"/><rect x="5" y="12" width="6" height="1" fill="#FF0000"/><rect x="5" y="4" width="5" height="1" fill="#000"/><rect x="4" y="5" width="7" height="5" fill="#000"/><rect x="5" y="10" width="5" height="1" fill="#000"/><rect x="6" y="10" width="3" height="6" fill="#000"/><rect x="6" y="5" width="1" height="1" fill="#F04040"/><rect x="7" y="5" width="1" height="1" fill="#FFF"/><rect x="8" y="5" width="1" height="1" fill="#F04040"/><rect x="5" y="6" width="1" height="1" fill="#F04040"/><rect x="6" y="6" width="1" height="1" fill="#FFF"/><rect x="7" y="6" width="1" height="1" fill="#F04040"/><rect x="8" y="6" width="1" height="1" fill="#FFF"/><rect x="9" y="6" width="1" height="1" fill="#F04040"/><rect x="5" y="7" width="1" height="1" fill="#FFF"/><rect x="6" y="7" width="1" height="1" fill="#F04040"/><rect x="7" y="7" width="1" height="1" fill="#FFF"/><rect x="8" y="7" width="1" height="1" fill="#F04040"/><rect x="9" y="7" width="1" height="1" fill="#FFF"/><rect x="5" y="8" width="1" height="1" fill="#F04040"/><rect x="6" y="8" width="1" height="1" fill="#FFF"/><rect x="7" y="8" width="1" height="1" fill="#F04040"/><rect x="8" y="8" width="1" height="1" fill="#FFF"/><rect x="9" y="8" width="1" height="1" fill="#F04040"/><rect x="6" y="9" width="1" height="1" fill="#F04040"/><rect x="7" y="9" width="1" height="1" fill="#FFF"/><rect x="8" y="9" width="1" height="1" fill="#F04040"/><rect x="7" y="6" width="1" height="4" fill="#A0A0A0"/><rect x="7" y="13" width="1" height="1" fill="#FFF"/></svg></div><div class="it red ip" style="left:23px;top:281px">192.52.233.48</div><div class="ic" style="left:7px;top:298px"><svg width="16" height="16" viewBox="0 0 16 16" shape-rendering="crispEdges" ><rect x="3" y="0" width="9" height="9" fill="#000"/><rect x="4" y="1" width="7" height="6" fill="#FFFFFF"/><rect x="5" y="2" width="5" height="4" fill="#000"/><rect x="6" y="3" width="3" height="2" fill="#00FF00"/><rect x="0" y="8" width="15" height="4" fill="#000"/><rect x="1" y="12" width="13" height="4" fill="#000"/><rect x="1" y="9" width="13" height="3" fill="#FFFFFF"/><rect x="4" y="11" width="7" height="1" fill="#000"/><rect x="11" y="10" width="3" height="1" fill="#000"/><rect x="2" y="10" width="1" height="1" fill="#F00"/><rect x="4" y="12" width="7" height="1" fill="#FFFFFF"/><rect x="3" y="13" width="9" height="1" fill="#FFFFFF"/><rect x="2" y="14" width="11" height="1" fill="#FFFFFF"/><rect x="4" y="13" width="1" height="1" fill="#000"/><rect x="6" y="13" width="1" height="1" fill="#000"/><rect x="8" y="13" width="1" height="1" fill="#000"/><rect x="10" y="13" width="1" height="1" fill="#000"/></svg></div><div class="it" style="left:23px;top:298px">Main router</div><div class="ic" style="left:7px;top:315px"><svg width="16" height="16" viewBox="0 0 16 16" shape-rendering="crispEdges" ><rect x="3" y="0" width="9" height="9" fill="#000"/><rect x="4" y="1" width="7" height="6" fill="#E8E8E8"/><rect x="5" y="2" width="5" height="4" fill="#000"/><rect x="6" y="3" width="3" height="2" fill="#E8E8E8"/><rect x="0" y="8" width="15" height="4" fill="#000"/><rect x="1" y="12" width="13" height="4" fill="#000"/><rect x="1" y="9" width="13" height="3" fill="#E8E8E8"/><rect x="4" y="11" width="7" height="1" fill="#000"/><rect x="11" y="10" width="3" height="1" fill="#000"/><rect x="2" y="10" width="1" height="1" fill="#000"/><rect x="4" y="12" width="7" height="1" fill="#E8E8E8"/><rect x="3" y="13" width="9" height="1" fill="#E8E8E8"/><rect x="2" y="14" width="11" height="1" fill="#E8E8E8"/><rect x="4" y="13" width="1" height="1" fill="#000"/><rect x="6" y="13" width="1" height="1" fill="#000"/><rect x="8" y="13" width="1" height="1" fill="#000"/><rect x="10" y="13" width="1" height="1" fill="#000"/><rect x="5" y="2" width="5" height="1" fill="#FF0000"/><rect x="4" y="3" width="2" height="2" fill="#FF0000"/><rect x="9" y="3" width="2" height="3" fill="#FF0000"/><rect x="8" y="6" width="2" height="1" fill="#FF0000"/><rect x="7" y="7" width="2" height="4" fill="#FF0000"/><rect x="7" y="12" width="2" height="3" fill="#FF0000"/><rect x="6" y="13" width="4" height="1" fill="#FF0000"/></svg></div><div class="it yel" style="left:23px;top:315px">www.tramp1.com</div><div class="ic" style="left:7px;top:332px"><svg width="16" height="16" viewBox="0 0 16 16" shape-rendering="crispEdges" ><rect x="3" y="0" width="9" height="9" fill="#000"/><rect x="4" y="1" width="7" height="6" fill="#E8E8E8"/><rect x="5" y="2" width="5" height="4" fill="#000"/><rect x="6" y="3" width="3" height="2" fill="#E8E8E8"/><rect x="0" y="8" width="15" height="4" fill="#000"/><rect x="1" y="12" width="13" height="4" fill="#000"/><rect x="1" y="9" width="13" height="3" fill="#E8E8E8"/><rect x="4" y="11" width="7" height="1" fill="#000"/><rect x="11" y="10" width="3" height="1" fill="#000"/><rect x="2" y="10" width="1" height="1" fill="#000"/><rect x="4" y="12" width="7" height="1" fill="#E8E8E8"/><rect x="3" y="13" width="9" height="1" fill="#E8E8E8"/><rect x="2" y="14" width="11" height="1" fill="#E8E8E8"/><rect x="4" y="13" width="1" height="1" fill="#000"/><rect x="6" y="13" width="1" height="1" fill="#000"/><rect x="8" y="13" width="1" height="1" fill="#000"/><rect x="10" y="13" width="1" height="1" fill="#000"/><rect x="5" y="2" width="5" height="1" fill="#FF0000"/><rect x="4" y="3" width="2" height="2" fill="#FF0000"/><rect x="9" y="3" width="2" height="3" fill="#FF0000"/><rect x="8" y="6" width="2" height="1" fill="#FF0000"/><rect x="7" y="7" width="2" height="4" fill="#FF0000"/><rect x="7" y="12" width="2" height="3" fill="#FF0000"/><rect x="6" y="13" width="4" height="1" fill="#FF0000"/></svg></div><div class="it yel" style="left:23px;top:332px">www.tramp2.com</div><div class="ic" style="left:7px;top:349px"><svg width="16" height="16" viewBox="0 0 16 16" shape-rendering="crispEdges" ><rect x="2" y="2" width="1" height="1" fill="#808080"/><rect x="6" y="2" width="1" height="1" fill="#808080"/><rect x="2" y="3" width="5" height="1" fill="#000"/><rect x="1" y="4" width="11" height="1" fill="#000"/><rect x="1" y="5" width="11" height="1" fill="#000"/><rect x="1" y="6" width="11" height="1" fill="#000"/><rect x="1" y="7" width="14" height="1" fill="#000"/><rect x="1" y="8" width="14" height="1" fill="#000"/><rect x="1" y="9" width="13" height="1" fill="#000"/><rect x="2" y="10" width="12" height="1" fill="#000"/><rect x="3" y="11" width="10" height="1" fill="#000"/><rect x="2" y="4" width="1" height="1" fill="#FFFFFF"/><rect x="3" y="4" width="1" height="1" fill="#FFFF00"/><rect x="4" y="4" width="1" height="1" fill="#FFFFFF"/><rect x="5" y="4" width="1" height="1" fill="#FFFF00"/><rect x="6" y="4" width="1" height="1" fill="#FFFFFF"/><rect x="2" y="5" width="1" height="1" fill="#FFFF00"/><rect x="3" y="5" width="1" height="1" fill="#FFFFFF"/><rect x="4" y="5" width="1" height="1" fill="#FFFF00"/><rect x="5" y="5" width="1" height="1" fill="#FFFFFF"/><rect x="6" y="5" width="1" height="1" fill="#FFFF00"/><rect x="7" y="5" width="1" height="1" fill="#FFFFFF"/><rect x="8" y="5" width="1" height="1" fill="#FFFF00"/><rect x="9" y="5" width="1" height="1" fill="#FFFFFF"/><rect x="10" y="5" width="1" height="1" fill="#FFFF00"/><rect x="2" y="6" width="1" height="1" fill="#FFFFFF"/><rect x="3" y="6" width="1" height="1" fill="#FFFF00"/><rect x="4" y="6" width="1" height="1" fill="#FFFFFF"/><rect x="5" y="6" width="1" height="1" fill="#FFFF00"/><rect x="6" y="6" width="1" height="1" fill="#FFFFFF"/><rect x="7" y="6" width="1" height="1" fill="#FFFF00"/><rect x="8" y="6" width="1" height="1" fill="#FFFFFF"/><rect x="9" y="6" width="1" height="1" fill="#FFFF00"/><rect x="10" y="6" width="1" height="1" fill="#FFFFFF"/><rect x="2" y="7" width="1" height="1" fill="#FFFF00"/><rect x="3" y="7" width="1" height="1" fill="#FFFFFF"/><rect x="4" y="7" width="1" height="1" fill="#FFFF00"/><rect x="2" y="8" width="1" height="1" fill="#FFFFFF"/><rect x="3" y="8" width="1" height="1" fill="#FFFF00"/><rect x="2" y="9" width="1" height="1" fill="#FFFF00"/><rect x="5" y="8" width="1" height="1" fill="#FFFF00"/><rect x="6" y="8" width="1" height="1" fill="#FFFFFF"/><rect x="7" y="8" width="1" height="1" fill="#FFFF00"/><rect x="8" y="8" width="1" height="1" fill="#FFFFFF"/><rect x="9" y="8" width="1" height="1" fill="#FFFF00"/><rect x="10" y="8" width="1" height="1" fill="#FFFFFF"/><rect x="11" y="8" width="1" height="1" fill="#FFFF00"/><rect x="12" y="8" width="1" height="1" fill="#FFFFFF"/><rect x="13" y="8" width="1" height="1" fill="#FFFF00"/><rect x="4" y="9" width="1" height="1" fill="#FFFF00"/><rect x="5" y="9" width="1" height="1" fill="#FFFFFF"/><rect x="6" y="9" width="1" height="1" fill="#FFFF00"/><rect x="7" y="9" width="1" height="1" fill="#FFFFFF"/><rect x="8" y="9" width="1" height="1" fill="#FFFF00"/><rect x="9" y="9" width="1" height="1" fill="#FFFFFF"/><rect x="10" y="9" width="1" height="1" fill="#FFFF00"/><rect x="11" y="9" width="1" height="1" fill="#FFFFFF"/><rect x="12" y="9" width="1" height="1" fill="#FFFF00"/><rect x="3" y="10" width="1" height="1" fill="#FFFF00"/><rect x="4" y="10" width="1" height="1" fill="#FFFFFF"/><rect x="5" y="10" width="1" height="1" fill="#FFFF00"/><rect x="6" y="10" width="1" height="1" fill="#FFFFFF"/><rect x="7" y="10" width="1" height="1" fill="#FFFF00"/><rect x="8" y="10" width="1" height="1" fill="#FFFFFF"/><rect x="9" y="10" width="1" height="1" fill="#FFFF00"/><rect x="10" y="10" width="1" height="1" fill="#FFFFFF"/><rect x="11" y="10" width="1" height="1" fill="#FFFF00"/></svg></div><div class="it sel" style="left:23px;top:349px">Root<svg class="bs" width="6.5" height="10" viewBox="0 0 6.5 10"><path d="M1.2 0.6L5.6 9.4" stroke="currentColor" stroke-width="1.05" fill="none"/></svg>USA Branch<svg class="bs" width="6.5" height="10" viewBox="0 0 6.5 10"><path d="M1.2 0.6L5.6 9.4" stroke="currentColor" stroke-width="1.05" fill="none"/></svg>Office<svg class="bs" width="6.5" height="10" viewBox="0 0 6.5 10"><path d="M1.2 0.6L5.6 9.4" stroke="currentColor" stroke-width="1.05" fill="none"/></svg></div><div class="ic" style="left:7px;top:366px"><svg width="16" height="16" viewBox="0 0 16 16" shape-rendering="crispEdges" ><rect x="7" y="0" width="1" height="2" fill="#00FF00"/><rect x="0" y="7" width="2" height="1" fill="#00FF00"/><rect x="13" y="7" width="2" height="1" fill="#00FF00"/><rect x="2" y="2" width="1" height="1" fill="#00FF00"/><rect x="12" y="2" width="1" height="1" fill="#00FF00"/><rect x="2" y="12" width="1" height="1" fill="#00FF00"/><rect x="12" y="12" width="1" height="1" fill="#00FF00"/><rect x="5" y="2" width="5" height="1" fill="#00FF00"/><rect x="4" y="3" width="8" height="1" fill="#00FF00"/><rect x="3" y="4" width="10" height="7" fill="#00FF00"/><rect x="4" y="11" width="8" height="1" fill="#00FF00"/><rect x="5" y="12" width="6" height="1" fill="#00FF00"/><rect x="5" y="4" width="5" height="1" fill="#000"/><rect x="4" y="5" width="7" height="5" fill="#000"/><rect x="5" y="10" width="5" height="1" fill="#000"/><rect x="6" y="10" width="3" height="6" fill="#000"/><rect x="6" y="5" width="1" height="1" fill="#00E000"/><rect x="7" y="5" width="1" height="1" fill="#FFF"/><rect x="8" y="5" width="1" height="1" fill="#00E000"/><rect x="5" y="6" width="1" height="1" fill="#00E000"/><rect x="6" y="6" width="1" height="1" fill="#FFF"/><rect x="7" y="6" width="1" height="1" fill="#00E000"/><rect x="8" y="6" width="1" height="1" fill="#FFF"/><rect x="9" y="6" width="1" height="1" fill="#00E000"/><rect x="5" y="7" width="1" height="1" fill="#FFF"/><rect x="6" y="7" width="1" height="1" fill="#00E000"/><rect x="7" y="7" width="1" height="1" fill="#FFF"/><rect x="8" y="7" width="1" height="1" fill="#00E000"/><rect x="9" y="7" width="1" height="1" fill="#FFF"/><rect x="5" y="8" width="1" height="1" fill="#00E000"/><rect x="6" y="8" width="1" height="1" fill="#FFF"/><rect x="7" y="8" width="1" height="1" fill="#00E000"/><rect x="8" y="8" width="1" height="1" fill="#FFF"/><rect x="9" y="8" width="1" height="1" fill="#00E000"/><rect x="6" y="9" width="1" height="1" fill="#00E000"/><rect x="7" y="9" width="1" height="1" fill="#FFF"/><rect x="8" y="9" width="1" height="1" fill="#00E000"/><rect x="7" y="6" width="1" height="4" fill="#A0A0A0"/><rect x="7" y="13" width="1" height="1" fill="#FFF"/></svg></div><div class="it" style="left:23px;top:366px">Drice C:<svg class="bs" width="6.5" height="10" viewBox="0 0 6.5 10"><path d="M1.2 0.6L5.6 9.4" stroke="currentColor" stroke-width="1.05" fill="none"/></svg></div><div class="ic" style="left:164px;top:94px"><svg width="16" height="16" viewBox="0 0 16 16" shape-rendering="crispEdges" ><rect x="7" y="0" width="1" height="2" fill="#00FF00"/><rect x="0" y="7" width="2" height="1" fill="#00FF00"/><rect x="13" y="7" width="2" height="1" fill="#00FF00"/><rect x="2" y="2" width="1" height="1" fill="#00FF00"/><rect x="12" y="2" width="1" height="1" fill="#00FF00"/><rect x="2" y="12" width="1" height="1" fill="#00FF00"/><rect x="12" y="12" width="1" height="1" fill="#00FF00"/><rect x="5" y="2" width="5" height="1" fill="#00FF00"/><rect x="4" y="3" width="8" height="1" fill="#00FF00"/><rect x="3" y="4" width="10" height="7" fill="#00FF00"/><rect x="4" y="11" width="8" height="1" fill="#00FF00"/><rect x="5" y="12" width="6" height="1" fill="#00FF00"/><rect x="5" y="4" width="5" height="1" fill="#000"/><rect x="4" y="5" width="7" height="5" fill="#000"/><rect x="5" y="10" width="5" height="1" fill="#000"/><rect x="6" y="10" width="3" height="6" fill="#000"/><rect x="6" y="5" width="1" height="1" fill="#00E000"/><rect x="7" y="5" width="1" height="1" fill="#FFF"/><rect x="8" y="5" width="1" height="1" fill="#00E000"/><rect x="5" y="6" width="1" height="1" fill="#00E000"/><rect x="6" y="6" width="1" height="1" fill="#FFF"/><rect x="7" y="6" width="1" height="1" fill="#00E000"/><rect x="8" y="6" width="1" height="1" fill="#FFF"/><rect x="9" y="6" width="1" height="1" fill="#00E000"/><rect x="5" y="7" width="1" height="1" fill="#FFF"/><rect x="6" y="7" width="1" height="1" fill="#00E000"/><rect x="7" y="7" width="1" height="1" fill="#FFF"/><rect x="8" y="7" width="1" height="1" fill="#00E000"/><rect x="9" y="7" width="1" height="1" fill="#FFF"/><rect x="5" y="8" width="1" height="1" fill="#00E000"/><rect x="6" y="8" width="1" height="1" fill="#FFF"/><rect x="7" y="8" width="1" height="1" fill="#00E000"/><rect x="8" y="8" width="1" height="1" fill="#FFF"/><rect x="9" y="8" width="1" height="1" fill="#00E000"/><rect x="6" y="9" width="1" height="1" fill="#00E000"/><rect x="7" y="9" width="1" height="1" fill="#FFF"/><rect x="8" y="9" width="1" height="1" fill="#00E000"/><rect x="7" y="6" width="1" height="4" fill="#A0A0A0"/><rect x="7" y="13" width="1" height="1" fill="#FFF"/></svg></div><div class="it" style="left:180px;top:94px">Drive D:<svg class="bs" width="6.5" height="10" viewBox="0 0 6.5 10"><path d="M1.2 0.6L5.6 9.4" stroke="currentColor" stroke-width="1.05" fill="none"/></svg></div><div class="ic" style="left:164px;top:111px"><svg width="16" height="16" viewBox="0 0 16 16" shape-rendering="crispEdges" ><rect x="7" y="0" width="1" height="2" fill="#00FF00"/><rect x="0" y="7" width="2" height="1" fill="#00FF00"/><rect x="13" y="7" width="2" height="1" fill="#00FF00"/><rect x="2" y="2" width="1" height="1" fill="#00FF00"/><rect x="12" y="2" width="1" height="1" fill="#00FF00"/><rect x="2" y="12" width="1" height="1" fill="#00FF00"/><rect x="12" y="12" width="1" height="1" fill="#00FF00"/><rect x="5" y="2" width="5" height="1" fill="#00FF00"/><rect x="4" y="3" width="8" height="1" fill="#00FF00"/><rect x="3" y="4" width="10" height="7" fill="#00FF00"/><rect x="4" y="11" width="8" height="1" fill="#00FF00"/><rect x="5" y="12" width="6" height="1" fill="#00FF00"/><rect x="5" y="4" width="5" height="1" fill="#000"/><rect x="4" y="5" width="7" height="5" fill="#000"/><rect x="5" y="10" width="5" height="1" fill="#000"/><rect x="6" y="10" width="3" height="6" fill="#000"/><rect x="6" y="5" width="1" height="1" fill="#00E000"/><rect x="7" y="5" width="1" height="1" fill="#FFF"/><rect x="8" y="5" width="1" height="1" fill="#00E000"/><rect x="5" y="6" width="1" height="1" fill="#00E000"/><rect x="6" y="6" width="1" height="1" fill="#FFF"/><rect x="7" y="6" width="1" height="1" fill="#00E000"/><rect x="8" y="6" width="1" height="1" fill="#FFF"/><rect x="9" y="6" width="1" height="1" fill="#00E000"/><rect x="5" y="7" width="1" height="1" fill="#FFF"/><rect x="6" y="7" width="1" height="1" fill="#00E000"/><rect x="7" y="7" width="1" height="1" fill="#FFF"/><rect x="8" y="7" width="1" height="1" fill="#00E000"/><rect x="9" y="7" width="1" height="1" fill="#FFF"/><rect x="5" y="8" width="1" height="1" fill="#00E000"/><rect x="6" y="8" width="1" height="1" fill="#FFF"/><rect x="7" y="8" width="1" height="1" fill="#00E000"/><rect x="8" y="8" width="1" height="1" fill="#FFF"/><rect x="9" y="8" width="1" height="1" fill="#00E000"/><rect x="6" y="9" width="1" height="1" fill="#00E000"/><rect x="7" y="9" width="1" height="1" fill="#FFF"/><rect x="8" y="9" width="1" height="1" fill="#00E000"/><rect x="7" y="6" width="1" height="4" fill="#A0A0A0"/><rect x="7" y="13" width="1" height="1" fill="#FFF"/></svg></div><div class="it" style="left:180px;top:111px">Drive F:<svg class="bs" width="6.5" height="10" viewBox="0 0 6.5 10"><path d="M1.2 0.6L5.6 9.4" stroke="currentColor" stroke-width="1.05" fill="none"/></svg></div><div class="ic" style="left:164px;top:128px"><svg width="16" height="16" viewBox="0 0 16 16" shape-rendering="crispEdges" ><rect x="2" y="2" width="1" height="1" fill="#808080"/><rect x="6" y="2" width="1" height="1" fill="#808080"/><rect x="2" y="3" width="5" height="1" fill="#000"/><rect x="1" y="4" width="11" height="1" fill="#000"/><rect x="1" y="5" width="11" height="1" fill="#000"/><rect x="1" y="6" width="11" height="1" fill="#000"/><rect x="1" y="7" width="14" height="1" fill="#000"/><rect x="1" y="8" width="14" height="1" fill="#000"/><rect x="1" y="9" width="13" height="1" fill="#000"/><rect x="2" y="10" width="12" height="1" fill="#000"/><rect x="3" y="11" width="10" height="1" fill="#000"/><rect x="2" y="4" width="1" height="1" fill="#FFFFFF"/><rect x="3" y="4" width="1" height="1" fill="#FFFF00"/><rect x="4" y="4" width="1" height="1" fill="#FFFFFF"/><rect x="5" y="4" width="1" height="1" fill="#FFFF00"/><rect x="6" y="4" width="1" height="1" fill="#FFFFFF"/><rect x="2" y="5" width="1" height="1" fill="#FFFF00"/><rect x="3" y="5" width="1" height="1" fill="#FFFFFF"/><rect x="4" y="5" width="1" height="1" fill="#FFFF00"/><rect x="5" y="5" width="1" height="1" fill="#FFFFFF"/><rect x="6" y="5" width="1" height="1" fill="#FFFF00"/><rect x="7" y="5" width="1" height="1" fill="#FFFFFF"/><rect x="8" y="5" width="1" height="1" fill="#FFFF00"/><rect x="9" y="5" width="1" height="1" fill="#FFFFFF"/><rect x="10" y="5" width="1" height="1" fill="#FFFF00"/><rect x="2" y="6" width="1" height="1" fill="#FFFFFF"/><rect x="3" y="6" width="1" height="1" fill="#FFFF00"/><rect x="4" y="6" width="1" height="1" fill="#FFFFFF"/><rect x="5" y="6" width="1" height="1" fill="#FFFF00"/><rect x="6" y="6" width="1" height="1" fill="#FFFFFF"/><rect x="7" y="6" width="1" height="1" fill="#FFFF00"/><rect x="8" y="6" width="1" height="1" fill="#FFFFFF"/><rect x="9" y="6" width="1" height="1" fill="#FFFF00"/><rect x="10" y="6" width="1" height="1" fill="#FFFFFF"/><rect x="2" y="7" width="1" height="1" fill="#FFFF00"/><rect x="3" y="7" width="1" height="1" fill="#FFFFFF"/><rect x="4" y="7" width="1" height="1" fill="#FFFF00"/><rect x="2" y="8" width="1" height="1" fill="#FFFFFF"/><rect x="3" y="8" width="1" height="1" fill="#FFFF00"/><rect x="2" y="9" width="1" height="1" fill="#FFFF00"/><rect x="5" y="8" width="1" height="1" fill="#FFFF00"/><rect x="6" y="8" width="1" height="1" fill="#FFFFFF"/><rect x="7" y="8" width="1" height="1" fill="#FFFF00"/><rect x="8" y="8" width="1" height="1" fill="#FFFFFF"/><rect x="9" y="8" width="1" height="1" fill="#FFFF00"/><rect x="10" y="8" width="1" height="1" fill="#FFFFFF"/><rect x="11" y="8" width="1" height="1" fill="#FFFF00"/><rect x="12" y="8" width="1" height="1" fill="#FFFFFF"/><rect x="13" y="8" width="1" height="1" fill="#FFFF00"/><rect x="4" y="9" width="1" height="1" fill="#FFFF00"/><rect x="5" y="9" width="1" height="1" fill="#FFFFFF"/><rect x="6" y="9" width="1" height="1" fill="#FFFF00"/><rect x="7" y="9" width="1" height="1" fill="#FFFFFF"/><rect x="8" y="9" width="1" height="1" fill="#FFFF00"/><rect x="9" y="9" width="1" height="1" fill="#FFFFFF"/><rect x="10" y="9" width="1" height="1" fill="#FFFF00"/><rect x="11" y="9" width="1" height="1" fill="#FFFFFF"/><rect x="12" y="9" width="1" height="1" fill="#FFFF00"/><rect x="3" y="10" width="1" height="1" fill="#FFFF00"/><rect x="4" y="10" width="1" height="1" fill="#FFFFFF"/><rect x="5" y="10" width="1" height="1" fill="#FFFF00"/><rect x="6" y="10" width="1" height="1" fill="#FFFFFF"/><rect x="7" y="10" width="1" height="1" fill="#FFFF00"/><rect x="8" y="10" width="1" height="1" fill="#FFFFFF"/><rect x="9" y="10" width="1" height="1" fill="#FFFF00"/><rect x="10" y="10" width="1" height="1" fill="#FFFFFF"/><rect x="11" y="10" width="1" height="1" fill="#FFFF00"/></svg></div><div class="it sel" style="left:180px;top:128px">Root<svg class="bs" width="6.5" height="10" viewBox="0 0 6.5 10"><path d="M1.2 0.6L5.6 9.4" stroke="currentColor" stroke-width="1.05" fill="none"/></svg>Asia<svg class="bs" width="6.5" height="10" viewBox="0 0 6.5 10"><path d="M1.2 0.6L5.6 9.4" stroke="currentColor" stroke-width="1.05" fill="none"/></svg></div><div class="ic" style="left:164px;top:145px"><svg width="16" height="16" viewBox="0 0 16 16" shape-rendering="crispEdges" ><rect x="3" y="0" width="9" height="9" fill="#000"/><rect x="4" y="1" width="7" height="6" fill="#FFFFFF"/><rect x="5" y="2" width="5" height="4" fill="#000"/><rect x="6" y="3" width="3" height="2" fill="#00FF00"/><rect x="0" y="8" width="15" height="4" fill="#000"/><rect x="1" y="12" width="13" height="4" fill="#000"/><rect x="1" y="9" width="13" height="3" fill="#FFFFFF"/><rect x="4" y="11" width="7" height="1" fill="#000"/><rect x="11" y="10" width="3" height="1" fill="#000"/><rect x="2" y="10" width="1" height="1" fill="#F00"/><rect x="4" y="12" width="7" height="1" fill="#FFFFFF"/><rect x="3" y="13" width="9" height="1" fill="#FFFFFF"/><rect x="2" y="14" width="11" height="1" fill="#FFFFFF"/><rect x="4" y="13" width="1" height="1" fill="#000"/><rect x="6" y="13" width="1" height="1" fill="#000"/><rect x="8" y="13" width="1" height="1" fill="#000"/><rect x="10" y="13" width="1" height="1" fill="#000"/></svg></div><div class="it" style="left:180px;top:145px">Main router</div><div class="ic" style="left:164px;top:162px"><svg width="16" height="16" viewBox="0 0 16 16" shape-rendering="crispEdges" ><rect x="3" y="0" width="9" height="9" fill="#000"/><rect x="4" y="1" width="7" height="6" fill="#FFFFFF"/><rect x="5" y="2" width="5" height="4" fill="#000"/><rect x="6" y="3" width="3" height="2" fill="#00FF00"/><rect x="0" y="8" width="15" height="4" fill="#000"/><rect x="1" y="12" width="13" height="4" fill="#000"/><rect x="1" y="9" width="13" height="3" fill="#FFFFFF"/><rect x="4" y="11" width="7" height="1" fill="#000"/><rect x="11" y="10" width="3" height="1" fill="#000"/><rect x="2" y="10" width="1" height="1" fill="#F00"/><rect x="4" y="12" width="7" height="1" fill="#FFFFFF"/><rect x="3" y="13" width="9" height="1" fill="#FFFFFF"/><rect x="2" y="14" width="11" height="1" fill="#FFFFFF"/><rect x="4" y="13" width="1" height="1" fill="#000"/><rect x="6" y="13" width="1" height="1" fill="#000"/><rect x="8" y="13" width="1" height="1" fill="#000"/><rect x="10" y="13" width="1" height="1" fill="#000"/></svg></div><div class="it" style="left:180px;top:162px">Main web server</div><div class="ic" style="left:164px;top:179px"><svg width="16" height="16" viewBox="0 0 16 16" shape-rendering="crispEdges" ><rect x="2" y="2" width="1" height="1" fill="#808080"/><rect x="6" y="2" width="1" height="1" fill="#808080"/><rect x="2" y="3" width="5" height="1" fill="#000"/><rect x="1" y="4" width="11" height="1" fill="#000"/><rect x="1" y="5" width="11" height="1" fill="#000"/><rect x="1" y="6" width="11" height="1" fill="#000"/><rect x="1" y="7" width="14" height="1" fill="#000"/><rect x="1" y="8" width="14" height="1" fill="#000"/><rect x="1" y="9" width="13" height="1" fill="#000"/><rect x="2" y="10" width="12" height="1" fill="#000"/><rect x="3" y="11" width="10" height="1" fill="#000"/><rect x="2" y="4" width="1" height="1" fill="#FFFFFF"/><rect x="3" y="4" width="1" height="1" fill="#FFFF00"/><rect x="4" y="4" width="1" height="1" fill="#FFFFFF"/><rect x="5" y="4" width="1" height="1" fill="#FFFF00"/><rect x="6" y="4" width="1" height="1" fill="#FFFFFF"/><rect x="2" y="5" width="1" height="1" fill="#FFFF00"/><rect x="3" y="5" width="1" height="1" fill="#FFFFFF"/><rect x="4" y="5" width="1" height="1" fill="#FFFF00"/><rect x="5" y="5" width="1" height="1" fill="#FFFFFF"/><rect x="6" y="5" width="1" height="1" fill="#FFFF00"/><rect x="7" y="5" width="1" height="1" fill="#FFFFFF"/><rect x="8" y="5" width="1" height="1" fill="#FFFF00"/><rect x="9" y="5" width="1" height="1" fill="#FFFFFF"/><rect x="10" y="5" width="1" height="1" fill="#FFFF00"/><rect x="2" y="6" width="1" height="1" fill="#FFFFFF"/><rect x="3" y="6" width="1" height="1" fill="#FFFF00"/><rect x="4" y="6" width="1" height="1" fill="#FFFFFF"/><rect x="5" y="6" width="1" height="1" fill="#FFFF00"/><rect x="6" y="6" width="1" height="1" fill="#FFFFFF"/><rect x="7" y="6" width="1" height="1" fill="#FFFF00"/><rect x="8" y="6" width="1" height="1" fill="#FFFFFF"/><rect x="9" y="6" width="1" height="1" fill="#FFFF00"/><rect x="10" y="6" width="1" height="1" fill="#FFFFFF"/><rect x="2" y="7" width="1" height="1" fill="#FFFF00"/><rect x="3" y="7" width="1" height="1" fill="#FFFFFF"/><rect x="4" y="7" width="1" height="1" fill="#FFFF00"/><rect x="2" y="8" width="1" height="1" fill="#FFFFFF"/><rect x="3" y="8" width="1" height="1" fill="#FFFF00"/><rect x="2" y="9" width="1" height="1" fill="#FFFF00"/><rect x="5" y="8" width="1" height="1" fill="#FFFF00"/><rect x="6" y="8" width="1" height="1" fill="#FFFFFF"/><rect x="7" y="8" width="1" height="1" fill="#FFFF00"/><rect x="8" y="8" width="1" height="1" fill="#FFFFFF"/><rect x="9" y="8" width="1" height="1" fill="#FFFF00"/><rect x="10" y="8" width="1" height="1" fill="#FFFFFF"/><rect x="11" y="8" width="1" height="1" fill="#FFFF00"/><rect x="12" y="8" width="1" height="1" fill="#FFFFFF"/><rect x="13" y="8" width="1" height="1" fill="#FFFF00"/><rect x="4" y="9" width="1" height="1" fill="#FFFF00"/><rect x="5" y="9" width="1" height="1" fill="#FFFFFF"/><rect x="6" y="9" width="1" height="1" fill="#FFFF00"/><rect x="7" y="9" width="1" height="1" fill="#FFFFFF"/><rect x="8" y="9" width="1" height="1" fill="#FFFF00"/><rect x="9" y="9" width="1" height="1" fill="#FFFFFF"/><rect x="10" y="9" width="1" height="1" fill="#FFFF00"/><rect x="11" y="9" width="1" height="1" fill="#FFFFFF"/><rect x="12" y="9" width="1" height="1" fill="#FFFF00"/><rect x="3" y="10" width="1" height="1" fill="#FFFF00"/><rect x="4" y="10" width="1" height="1" fill="#FFFFFF"/><rect x="5" y="10" width="1" height="1" fill="#FFFF00"/><rect x="6" y="10" width="1" height="1" fill="#FFFFFF"/><rect x="7" y="10" width="1" height="1" fill="#FFFF00"/><rect x="8" y="10" width="1" height="1" fill="#FFFFFF"/><rect x="9" y="10" width="1" height="1" fill="#FFFF00"/><rect x="10" y="10" width="1" height="1" fill="#FFFFFF"/><rect x="11" y="10" width="1" height="1" fill="#FFFF00"/></svg></div><div class="it sel" style="left:180px;top:179px">Root<svg class="bs" width="6.5" height="10" viewBox="0 0 6.5 10"><path d="M1.2 0.6L5.6 9.4" stroke="currentColor" stroke-width="1.05" fill="none"/></svg>Asia<svg class="bs" width="6.5" height="10" viewBox="0 0 6.5 10"><path d="M1.2 0.6L5.6 9.4" stroke="currentColor" stroke-width="1.05" fill="none"/></svg>Web tests<svg class="bs" width="6.5" height="10" viewBox="0 0 6.5 10"><path d="M1.2 0.6L5.6 9.4" stroke="currentColor" stroke-width="1.05" fill="none"/></svg></div><div class="ic" style="left:164px;top:196px"><svg width="16" height="16" viewBox="0 0 16 16" shape-rendering="crispEdges" ><rect x="3" y="0" width="9" height="9" fill="#000"/><rect x="4" y="1" width="7" height="6" fill="#FFFFFF"/><rect x="5" y="2" width="5" height="4" fill="#000"/><rect x="6" y="3" width="3" height="2" fill="#00FF00"/><rect x="0" y="8" width="15" height="4" fill="#000"/><rect x="1" y="12" width="13" height="4" fill="#000"/><rect x="1" y="9" width="13" height="3" fill="#FFFFFF"/><rect x="4" y="11" width="7" height="1" fill="#000"/><rect x="11" y="10" width="3" height="1" fill="#000"/><rect x="2" y="10" width="1" height="1" fill="#F00"/><rect x="4" y="12" width="7" height="1" fill="#FFFFFF"/><rect x="3" y="13" width="9" height="1" fill="#FFFFFF"/><rect x="2" y="14" width="11" height="1" fill="#FFFFFF"/><rect x="4" y="13" width="1" height="1" fill="#000"/><rect x="6" y="13" width="1" height="1" fill="#000"/><rect x="8" y="13" width="1" height="1" fill="#000"/><rect x="10" y="13" width="1" height="1" fill="#000"/></svg></div><div class="it" style="left:180px;top:196px">groups.google.com</div><div class="ic" style="left:164px;top:213px"><svg width="16" height="16" viewBox="0 0 16 16" shape-rendering="crispEdges" ><rect x="3" y="0" width="9" height="9" fill="#000"/><rect x="4" y="1" width="7" height="6" fill="#FFFFFF"/><rect x="5" y="2" width="5" height="4" fill="#000"/><rect x="6" y="3" width="3" height="2" fill="#00FF00"/><rect x="0" y="8" width="15" height="4" fill="#000"/><rect x="1" y="12" width="13" height="4" fill="#000"/><rect x="1" y="9" width="13" height="3" fill="#FFFFFF"/><rect x="4" y="11" width="7" height="1" fill="#000"/><rect x="11" y="10" width="3" height="1" fill="#000"/><rect x="2" y="10" width="1" height="1" fill="#F00"/><rect x="4" y="12" width="7" height="1" fill="#FFFFFF"/><rect x="3" y="13" width="9" height="1" fill="#FFFFFF"/><rect x="2" y="14" width="11" height="1" fill="#FFFFFF"/><rect x="4" y="13" width="1" height="1" fill="#000"/><rect x="6" y="13" width="1" height="1" fill="#000"/><rect x="8" y="13" width="1" height="1" fill="#000"/><rect x="10" y="13" width="1" height="1" fill="#000"/></svg></div><div class="it" style="left:180px;top:213px">www.altavista.com</div><div class="ic" style="left:164px;top:230px"><svg width="16" height="16" viewBox="0 0 16 16" shape-rendering="crispEdges" ><rect x="3" y="0" width="9" height="9" fill="#000"/><rect x="4" y="1" width="7" height="6" fill="#FFFFFF"/><rect x="5" y="2" width="5" height="4" fill="#000"/><rect x="6" y="3" width="3" height="2" fill="#00FF00"/><rect x="0" y="8" width="15" height="4" fill="#000"/><rect x="1" y="12" width="13" height="4" fill="#000"/><rect x="1" y="9" width="13" height="3" fill="#FFFFFF"/><rect x="4" y="11" width="7" height="1" fill="#000"/><rect x="11" y="10" width="3" height="1" fill="#000"/><rect x="2" y="10" width="1" height="1" fill="#F00"/><rect x="4" y="12" width="7" height="1" fill="#FFFFFF"/><rect x="3" y="13" width="9" height="1" fill="#FFFFFF"/><rect x="2" y="14" width="11" height="1" fill="#FFFFFF"/><rect x="4" y="13" width="1" height="1" fill="#000"/><rect x="6" y="13" width="1" height="1" fill="#000"/><rect x="8" y="13" width="1" height="1" fill="#000"/><rect x="10" y="13" width="1" height="1" fill="#000"/></svg></div><div class="it" style="left:180px;top:230px">www.google.com</div><div class="ic" style="left:164px;top:247px"><svg width="16" height="16" viewBox="0 0 16 16" shape-rendering="crispEdges" ><rect x="3" y="0" width="9" height="9" fill="#000"/><rect x="4" y="1" width="7" height="6" fill="#FFFFFF"/><rect x="5" y="2" width="5" height="4" fill="#000"/><rect x="6" y="3" width="3" height="2" fill="#00FF00"/><rect x="0" y="8" width="15" height="4" fill="#000"/><rect x="1" y="12" width="13" height="4" fill="#000"/><rect x="1" y="9" width="13" height="3" fill="#FFFFFF"/><rect x="4" y="11" width="7" height="1" fill="#000"/><rect x="11" y="10" width="3" height="1" fill="#000"/><rect x="2" y="10" width="1" height="1" fill="#F00"/><rect x="4" y="12" width="7" height="1" fill="#FFFFFF"/><rect x="3" y="13" width="9" height="1" fill="#FFFFFF"/><rect x="2" y="14" width="11" height="1" fill="#FFFFFF"/><rect x="4" y="13" width="1" height="1" fill="#000"/><rect x="6" y="13" width="1" height="1" fill="#000"/><rect x="8" y="13" width="1" height="1" fill="#000"/><rect x="10" y="13" width="1" height="1" fill="#000"/></svg></div><div class="it" style="left:180px;top:247px">www.yahoo.com</div><div class="ic" style="left:164px;top:264px"><svg width="16" height="16" viewBox="0 0 16 16" shape-rendering="crispEdges" ><rect x="2" y="2" width="1" height="1" fill="#808080"/><rect x="6" y="2" width="1" height="1" fill="#808080"/><rect x="2" y="3" width="5" height="1" fill="#000"/><rect x="1" y="4" width="11" height="1" fill="#000"/><rect x="1" y="5" width="11" height="1" fill="#000"/><rect x="1" y="6" width="11" height="1" fill="#000"/><rect x="1" y="7" width="14" height="1" fill="#000"/><rect x="1" y="8" width="14" height="1" fill="#000"/><rect x="1" y="9" width="13" height="1" fill="#000"/><rect x="2" y="10" width="12" height="1" fill="#000"/><rect x="3" y="11" width="10" height="1" fill="#000"/><rect x="2" y="4" width="1" height="1" fill="#FFFFFF"/><rect x="3" y="4" width="1" height="1" fill="#FFFF00"/><rect x="4" y="4" width="1" height="1" fill="#FFFFFF"/><rect x="5" y="4" width="1" height="1" fill="#FFFF00"/><rect x="6" y="4" width="1" height="1" fill="#FFFFFF"/><rect x="2" y="5" width="1" height="1" fill="#FFFF00"/><rect x="3" y="5" width="1" height="1" fill="#FFFFFF"/><rect x="4" y="5" width="1" height="1" fill="#FFFF00"/><rect x="5" y="5" width="1" height="1" fill="#FFFFFF"/><rect x="6" y="5" width="1" height="1" fill="#FFFF00"/><rect x="7" y="5" width="1" height="1" fill="#FFFFFF"/><rect x="8" y="5" width="1" height="1" fill="#FFFF00"/><rect x="9" y="5" width="1" height="1" fill="#FFFFFF"/><rect x="10" y="5" width="1" height="1" fill="#FFFF00"/><rect x="2" y="6" width="1" height="1" fill="#FFFFFF"/><rect x="3" y="6" width="1" height="1" fill="#FFFF00"/><rect x="4" y="6" width="1" height="1" fill="#FFFFFF"/><rect x="5" y="6" width="1" height="1" fill="#FFFF00"/><rect x="6" y="6" width="1" height="1" fill="#FFFFFF"/><rect x="7" y="6" width="1" height="1" fill="#FFFF00"/><rect x="8" y="6" width="1" height="1" fill="#FFFFFF"/><rect x="9" y="6" width="1" height="1" fill="#FFFF00"/><rect x="10" y="6" width="1" height="1" fill="#FFFFFF"/><rect x="2" y="7" width="1" height="1" fill="#FFFF00"/><rect x="3" y="7" width="1" height="1" fill="#FFFFFF"/><rect x="4" y="7" width="1" height="1" fill="#FFFF00"/><rect x="2" y="8" width="1" height="1" fill="#FFFFFF"/><rect x="3" y="8" width="1" height="1" fill="#FFFF00"/><rect x="2" y="9" width="1" height="1" fill="#FFFF00"/><rect x="5" y="8" width="1" height="1" fill="#FFFF00"/><rect x="6" y="8" width="1" height="1" fill="#FFFFFF"/><rect x="7" y="8" width="1" height="1" fill="#FFFF00"/><rect x="8" y="8" width="1" height="1" fill="#FFFFFF"/><rect x="9" y="8" width="1" height="1" fill="#FFFF00"/><rect x="10" y="8" width="1" height="1" fill="#FFFFFF"/><rect x="11" y="8" width="1" height="1" fill="#FFFF00"/><rect x="12" y="8" width="1" height="1" fill="#FFFFFF"/><rect x="13" y="8" width="1" height="1" fill="#FFFF00"/><rect x="4" y="9" width="1" height="1" fill="#FFFF00"/><rect x="5" y="9" width="1" height="1" fill="#FFFFFF"/><rect x="6" y="9" width="1" height="1" fill="#FFFF00"/><rect x="7" y="9" width="1" height="1" fill="#FFFFFF"/><rect x="8" y="9" width="1" height="1" fill="#FFFF00"/><rect x="9" y="9" width="1" height="1" fill="#FFFFFF"/><rect x="10" y="9" width="1" height="1" fill="#FFFF00"/><rect x="11" y="9" width="1" height="1" fill="#FFFFFF"/><rect x="12" y="9" width="1" height="1" fill="#FFFF00"/><rect x="3" y="10" width="1" height="1" fill="#FFFF00"/><rect x="4" y="10" width="1" height="1" fill="#FFFFFF"/><rect x="5" y="10" width="1" height="1" fill="#FFFF00"/><rect x="6" y="10" width="1" height="1" fill="#FFFFFF"/><rect x="7" y="10" width="1" height="1" fill="#FFFF00"/><rect x="8" y="10" width="1" height="1" fill="#FFFFFF"/><rect x="9" y="10" width="1" height="1" fill="#FFFF00"/><rect x="10" y="10" width="1" height="1" fill="#FFFFFF"/><rect x="11" y="10" width="1" height="1" fill="#FFFF00"/></svg></div><div class="it sel" style="left:180px;top:264px">Root<svg class="bs" width="6.5" height="10" viewBox="0 0 6.5 10"><path d="M1.2 0.6L5.6 9.4" stroke="currentColor" stroke-width="1.05" fill="none"/></svg>Asia<svg class="bs" width="6.5" height="10" viewBox="0 0 6.5 10"><path d="M1.2 0.6L5.6 9.4" stroke="currentColor" stroke-width="1.05" fill="none"/></svg>Ping tests<svg class="bs" width="6.5" height="10" viewBox="0 0 6.5 10"><path d="M1.2 0.6L5.6 9.4" stroke="currentColor" stroke-width="1.05" fill="none"/></svg></div><div class="ic" style="left:164px;top:281px"><svg width="16" height="16" viewBox="0 0 16 16" shape-rendering="crispEdges" ><rect x="3" y="0" width="9" height="9" fill="#000"/><rect x="4" y="1" width="7" height="6" fill="#FF0000"/><rect x="5" y="2" width="5" height="4" fill="#000"/><rect x="6" y="3" width="3" height="2" fill="#FFFFFF"/><rect x="0" y="8" width="15" height="4" fill="#000"/><rect x="1" y="12" width="13" height="4" fill="#000"/><rect x="1" y="9" width="13" height="3" fill="#FF0000"/><rect x="4" y="11" width="7" height="1" fill="#000"/><rect x="11" y="10" width="3" height="1" fill="#000"/><rect x="2" y="10" width="1" height="1" fill="#000"/><rect x="4" y="12" width="7" height="1" fill="#FF0000"/><rect x="3" y="13" width="9" height="1" fill="#FF0000"/><rect x="2" y="14" width="11" height="1" fill="#FF0000"/><rect x="4" y="13" width="1" height="1" fill="#000"/><rect x="6" y="13" width="1" height="1" fill="#000"/><rect x="8" y="13" width="1" height="1" fill="#000"/><rect x="10" y="13" width="1" height="1" fill="#000"/></svg></div><div class="it red ip" style="left:180px;top:281px">192.52.233.10</div><div class="ic" style="left:164px;top:298px"><svg width="16" height="16" viewBox="0 0 16 16" shape-rendering="crispEdges" ><rect x="3" y="0" width="9" height="9" fill="#000"/><rect x="4" y="1" width="7" height="6" fill="#FFFFFF"/><rect x="5" y="2" width="5" height="4" fill="#000"/><rect x="6" y="3" width="3" height="2" fill="#00FF00"/><rect x="0" y="8" width="15" height="4" fill="#000"/><rect x="1" y="12" width="13" height="4" fill="#000"/><rect x="1" y="9" width="13" height="3" fill="#FFFFFF"/><rect x="4" y="11" width="7" height="1" fill="#000"/><rect x="11" y="10" width="3" height="1" fill="#000"/><rect x="2" y="10" width="1" height="1" fill="#F00"/><rect x="4" y="12" width="7" height="1" fill="#FFFFFF"/><rect x="3" y="13" width="9" height="1" fill="#FFFFFF"/><rect x="2" y="14" width="11" height="1" fill="#FFFFFF"/><rect x="4" y="13" width="1" height="1" fill="#000"/><rect x="6" y="13" width="1" height="1" fill="#000"/><rect x="8" y="13" width="1" height="1" fill="#000"/><rect x="10" y="13" width="1" height="1" fill="#000"/></svg></div><div class="it ip" style="left:180px;top:298px">192.52.233.11</div><div class="ic" style="left:164px;top:315px"><svg width="16" height="16" viewBox="0 0 16 16" shape-rendering="crispEdges" ><rect x="3" y="0" width="9" height="9" fill="#000"/><rect x="4" y="1" width="7" height="6" fill="#FFFFFF"/><rect x="5" y="2" width="5" height="4" fill="#000"/><rect x="6" y="3" width="3" height="2" fill="#00FF00"/><rect x="0" y="8" width="15" height="4" fill="#000"/><rect x="1" y="12" width="13" height="4" fill="#000"/><rect x="1" y="9" width="13" height="3" fill="#FFFFFF"/><rect x="4" y="11" width="7" height="1" fill="#000"/><rect x="11" y="10" width="3" height="1" fill="#000"/><rect x="2" y="10" width="1" height="1" fill="#F00"/><rect x="4" y="12" width="7" height="1" fill="#FFFFFF"/><rect x="3" y="13" width="9" height="1" fill="#FFFFFF"/><rect x="2" y="14" width="11" height="1" fill="#FFFFFF"/><rect x="4" y="13" width="1" height="1" fill="#000"/><rect x="6" y="13" width="1" height="1" fill="#000"/><rect x="8" y="13" width="1" height="1" fill="#000"/><rect x="10" y="13" width="1" height="1" fill="#000"/></svg></div><div class="it ip" style="left:180px;top:315px">192.52.233.12</div><div class="ic" style="left:164px;top:332px"><svg width="16" height="16" viewBox="0 0 16 16" shape-rendering="crispEdges" ><rect x="3" y="0" width="9" height="9" fill="#000"/><rect x="4" y="1" width="7" height="6" fill="#FFFFFF"/><rect x="5" y="2" width="5" height="4" fill="#000"/><rect x="6" y="3" width="3" height="2" fill="#00FF00"/><rect x="0" y="8" width="15" height="4" fill="#000"/><rect x="1" y="12" width="13" height="4" fill="#000"/><rect x="1" y="9" width="13" height="3" fill="#FFFFFF"/><rect x="4" y="11" width="7" height="1" fill="#000"/><rect x="11" y="10" width="3" height="1" fill="#000"/><rect x="2" y="10" width="1" height="1" fill="#F00"/><rect x="4" y="12" width="7" height="1" fill="#FFFFFF"/><rect x="3" y="13" width="9" height="1" fill="#FFFFFF"/><rect x="2" y="14" width="11" height="1" fill="#FFFFFF"/><rect x="4" y="13" width="1" height="1" fill="#000"/><rect x="6" y="13" width="1" height="1" fill="#000"/><rect x="8" y="13" width="1" height="1" fill="#000"/><rect x="10" y="13" width="1" height="1" fill="#000"/></svg></div><div class="it ip" style="left:180px;top:332px">192.52.233.13</div><div class="ic" style="left:164px;top:349px"><svg width="16" height="16" viewBox="0 0 16 16" shape-rendering="crispEdges" ><rect x="3" y="0" width="9" height="9" fill="#000"/><rect x="4" y="1" width="7" height="6" fill="#FF0000"/><rect x="5" y="2" width="5" height="4" fill="#000"/><rect x="6" y="3" width="3" height="2" fill="#FFFFFF"/><rect x="0" y="8" width="15" height="4" fill="#000"/><rect x="1" y="12" width="13" height="4" fill="#000"/><rect x="1" y="9" width="13" height="3" fill="#FF0000"/><rect x="4" y="11" width="7" height="1" fill="#000"/><rect x="11" y="10" width="3" height="1" fill="#000"/><rect x="2" y="10" width="1" height="1" fill="#000"/><rect x="4" y="12" width="7" height="1" fill="#FF0000"/><rect x="3" y="13" width="9" height="1" fill="#FF0000"/><rect x="2" y="14" width="11" height="1" fill="#FF0000"/><rect x="4" y="13" width="1" height="1" fill="#000"/><rect x="6" y="13" width="1" height="1" fill="#000"/><rect x="8" y="13" width="1" height="1" fill="#000"/><rect x="10" y="13" width="1" height="1" fill="#000"/></svg></div><div class="it red ip" style="left:180px;top:349px">192.52.233.14</div><div class="ic" style="left:164px;top:366px"><svg width="16" height="16" viewBox="0 0 16 16" shape-rendering="crispEdges" ><rect x="3" y="0" width="9" height="9" fill="#000"/><rect x="4" y="1" width="7" height="6" fill="#FFFFFF"/><rect x="5" y="2" width="5" height="4" fill="#000"/><rect x="6" y="3" width="3" height="2" fill="#00FF00"/><rect x="0" y="8" width="15" height="4" fill="#000"/><rect x="1" y="12" width="13" height="4" fill="#000"/><rect x="1" y="9" width="13" height="3" fill="#FFFFFF"/><rect x="4" y="11" width="7" height="1" fill="#000"/><rect x="11" y="10" width="3" height="1" fill="#000"/><rect x="2" y="10" width="1" height="1" fill="#F00"/><rect x="4" y="12" width="7" height="1" fill="#FFFFFF"/><rect x="3" y="13" width="9" height="1" fill="#FFFFFF"/><rect x="2" y="14" width="11" height="1" fill="#FFFFFF"/><rect x="4" y="13" width="1" height="1" fill="#000"/><rect x="6" y="13" width="1" height="1" fill="#000"/><rect x="8" y="13" width="1" height="1" fill="#000"/><rect x="10" y="13" width="1" height="1" fill="#000"/></svg></div><div class="it ip" style="left:180px;top:366px">192.52.233.15</div><div class="ic" style="left:321px;top:94px"><svg width="16" height="16" viewBox="0 0 16 16" shape-rendering="crispEdges" ><rect x="3" y="0" width="9" height="9" fill="#000"/><rect x="4" y="1" width="7" height="6" fill="#FFFFFF"/><rect x="5" y="2" width="5" height="4" fill="#000"/><rect x="6" y="3" width="3" height="2" fill="#00FF00"/><rect x="0" y="8" width="15" height="4" fill="#000"/><rect x="1" y="12" width="13" height="4" fill="#000"/><rect x="1" y="9" width="13" height="3" fill="#FFFFFF"/><rect x="4" y="11" width="7" height="1" fill="#000"/><rect x="11" y="10" width="3" height="1" fill="#000"/><rect x="2" y="10" width="1" height="1" fill="#F00"/><rect x="4" y="12" width="7" height="1" fill="#FFFFFF"/><rect x="3" y="13" width="9" height="1" fill="#FFFFFF"/><rect x="2" y="14" width="11" height="1" fill="#FFFFFF"/><rect x="4" y="13" width="1" height="1" fill="#000"/><rect x="6" y="13" width="1" height="1" fill="#000"/><rect x="8" y="13" width="1" height="1" fill="#000"/><rect x="10" y="13" width="1" height="1" fill="#000"/></svg></div><div class="it ip" style="left:337px;top:94px">192.52.233.25</div><div class="ic" style="left:321px;top:111px"><svg width="16" height="16" viewBox="0 0 16 16" shape-rendering="crispEdges" ><rect x="3" y="0" width="9" height="9" fill="#000"/><rect x="4" y="1" width="7" height="6" fill="#FFFFFF"/><rect x="5" y="2" width="5" height="4" fill="#000"/><rect x="6" y="3" width="3" height="2" fill="#00FF00"/><rect x="0" y="8" width="15" height="4" fill="#000"/><rect x="1" y="12" width="13" height="4" fill="#000"/><rect x="1" y="9" width="13" height="3" fill="#FFFFFF"/><rect x="4" y="11" width="7" height="1" fill="#000"/><rect x="11" y="10" width="3" height="1" fill="#000"/><rect x="2" y="10" width="1" height="1" fill="#F00"/><rect x="4" y="12" width="7" height="1" fill="#FFFFFF"/><rect x="3" y="13" width="9" height="1" fill="#FFFFFF"/><rect x="2" y="14" width="11" height="1" fill="#FFFFFF"/><rect x="4" y="13" width="1" height="1" fill="#000"/><rect x="6" y="13" width="1" height="1" fill="#000"/><rect x="8" y="13" width="1" height="1" fill="#000"/><rect x="10" y="13" width="1" height="1" fill="#000"/></svg></div><div class="it ip" style="left:337px;top:111px">192.52.233.26</div><div class="ic" style="left:321px;top:128px"><svg width="16" height="16" viewBox="0 0 16 16" shape-rendering="crispEdges" ><rect x="3" y="0" width="9" height="9" fill="#000"/><rect x="4" y="1" width="7" height="6" fill="#FF0000"/><rect x="5" y="2" width="5" height="4" fill="#000"/><rect x="6" y="3" width="3" height="2" fill="#FFFFFF"/><rect x="0" y="8" width="15" height="4" fill="#000"/><rect x="1" y="12" width="13" height="4" fill="#000"/><rect x="1" y="9" width="13" height="3" fill="#FF0000"/><rect x="4" y="11" width="7" height="1" fill="#000"/><rect x="11" y="10" width="3" height="1" fill="#000"/><rect x="2" y="10" width="1" height="1" fill="#000"/><rect x="4" y="12" width="7" height="1" fill="#FF0000"/><rect x="3" y="13" width="9" height="1" fill="#FF0000"/><rect x="2" y="14" width="11" height="1" fill="#FF0000"/><rect x="4" y="13" width="1" height="1" fill="#000"/><rect x="6" y="13" width="1" height="1" fill="#000"/><rect x="8" y="13" width="1" height="1" fill="#000"/><rect x="10" y="13" width="1" height="1" fill="#000"/></svg></div><div class="it red ip" style="left:337px;top:128px">192.52.233.27</div><div class="ic" style="left:321px;top:145px"><svg width="16" height="16" viewBox="0 0 16 16" shape-rendering="crispEdges" ><rect x="3" y="0" width="9" height="9" fill="#000"/><rect x="4" y="1" width="7" height="6" fill="#FF0000"/><rect x="5" y="2" width="5" height="4" fill="#000"/><rect x="6" y="3" width="3" height="2" fill="#FFFFFF"/><rect x="0" y="8" width="15" height="4" fill="#000"/><rect x="1" y="12" width="13" height="4" fill="#000"/><rect x="1" y="9" width="13" height="3" fill="#FF0000"/><rect x="4" y="11" width="7" height="1" fill="#000"/><rect x="11" y="10" width="3" height="1" fill="#000"/><rect x="2" y="10" width="1" height="1" fill="#000"/><rect x="4" y="12" width="7" height="1" fill="#FF0000"/><rect x="3" y="13" width="9" height="1" fill="#FF0000"/><rect x="2" y="14" width="11" height="1" fill="#FF0000"/><rect x="4" y="13" width="1" height="1" fill="#000"/><rect x="6" y="13" width="1" height="1" fill="#000"/><rect x="8" y="13" width="1" height="1" fill="#000"/><rect x="10" y="13" width="1" height="1" fill="#000"/></svg></div><div class="it red ip" style="left:337px;top:145px">192.52.233.29</div><div class="ic" style="left:321px;top:162px"><svg width="16" height="16" viewBox="0 0 16 16" shape-rendering="crispEdges" ><rect x="3" y="0" width="9" height="9" fill="#000"/><rect x="4" y="1" width="7" height="6" fill="#FFFFFF"/><rect x="5" y="2" width="5" height="4" fill="#000"/><rect x="6" y="3" width="3" height="2" fill="#00FF00"/><rect x="0" y="8" width="15" height="4" fill="#000"/><rect x="1" y="12" width="13" height="4" fill="#000"/><rect x="1" y="9" width="13" height="3" fill="#FFFFFF"/><rect x="4" y="11" width="7" height="1" fill="#000"/><rect x="11" y="10" width="3" height="1" fill="#000"/><rect x="2" y="10" width="1" height="1" fill="#F00"/><rect x="4" y="12" width="7" height="1" fill="#FFFFFF"/><rect x="3" y="13" width="9" height="1" fill="#FFFFFF"/><rect x="2" y="14" width="11" height="1" fill="#FFFFFF"/><rect x="4" y="13" width="1" height="1" fill="#000"/><rect x="6" y="13" width="1" height="1" fill="#000"/><rect x="8" y="13" width="1" height="1" fill="#000"/><rect x="10" y="13" width="1" height="1" fill="#000"/></svg></div><div class="it ip" style="left:337px;top:162px">192.52.233.35</div><div class="ic" style="left:321px;top:179px"><svg width="16" height="16" viewBox="0 0 16 16" shape-rendering="crispEdges" ><rect x="3" y="0" width="9" height="9" fill="#000"/><rect x="4" y="1" width="7" height="6" fill="#FFFFFF"/><rect x="5" y="2" width="5" height="4" fill="#000"/><rect x="6" y="3" width="3" height="2" fill="#00FF00"/><rect x="0" y="8" width="15" height="4" fill="#000"/><rect x="1" y="12" width="13" height="4" fill="#000"/><rect x="1" y="9" width="13" height="3" fill="#FFFFFF"/><rect x="4" y="11" width="7" height="1" fill="#000"/><rect x="11" y="10" width="3" height="1" fill="#000"/><rect x="2" y="10" width="1" height="1" fill="#F00"/><rect x="4" y="12" width="7" height="1" fill="#FFFFFF"/><rect x="3" y="13" width="9" height="1" fill="#FFFFFF"/><rect x="2" y="14" width="11" height="1" fill="#FFFFFF"/><rect x="4" y="13" width="1" height="1" fill="#000"/><rect x="6" y="13" width="1" height="1" fill="#000"/><rect x="8" y="13" width="1" height="1" fill="#000"/><rect x="10" y="13" width="1" height="1" fill="#000"/></svg></div><div class="it ip" style="left:337px;top:179px">192.52.233.36</div><div class="ic" style="left:321px;top:196px"><svg width="16" height="16" viewBox="0 0 16 16" shape-rendering="crispEdges" ><rect x="3" y="0" width="9" height="9" fill="#000"/><rect x="4" y="1" width="7" height="6" fill="#FFFFFF"/><rect x="5" y="2" width="5" height="4" fill="#000"/><rect x="6" y="3" width="3" height="2" fill="#00FF00"/><rect x="0" y="8" width="15" height="4" fill="#000"/><rect x="1" y="12" width="13" height="4" fill="#000"/><rect x="1" y="9" width="13" height="3" fill="#FFFFFF"/><rect x="4" y="11" width="7" height="1" fill="#000"/><rect x="11" y="10" width="3" height="1" fill="#000"/><rect x="2" y="10" width="1" height="1" fill="#F00"/><rect x="4" y="12" width="7" height="1" fill="#FFFFFF"/><rect x="3" y="13" width="9" height="1" fill="#FFFFFF"/><rect x="2" y="14" width="11" height="1" fill="#FFFFFF"/><rect x="4" y="13" width="1" height="1" fill="#000"/><rect x="6" y="13" width="1" height="1" fill="#000"/><rect x="8" y="13" width="1" height="1" fill="#000"/><rect x="10" y="13" width="1" height="1" fill="#000"/></svg></div><div class="it ip" style="left:337px;top:196px">192.52.233.37</div><div class="ic" style="left:321px;top:213px"><svg width="16" height="16" viewBox="0 0 16 16" shape-rendering="crispEdges" ><rect x="3" y="0" width="9" height="9" fill="#000"/><rect x="4" y="1" width="7" height="6" fill="#FFFFFF"/><rect x="5" y="2" width="5" height="4" fill="#000"/><rect x="6" y="3" width="3" height="2" fill="#00FF00"/><rect x="0" y="8" width="15" height="4" fill="#000"/><rect x="1" y="12" width="13" height="4" fill="#000"/><rect x="1" y="9" width="13" height="3" fill="#FFFFFF"/><rect x="4" y="11" width="7" height="1" fill="#000"/><rect x="11" y="10" width="3" height="1" fill="#000"/><rect x="2" y="10" width="1" height="1" fill="#F00"/><rect x="4" y="12" width="7" height="1" fill="#FFFFFF"/><rect x="3" y="13" width="9" height="1" fill="#FFFFFF"/><rect x="2" y="14" width="11" height="1" fill="#FFFFFF"/><rect x="4" y="13" width="1" height="1" fill="#000"/><rect x="6" y="13" width="1" height="1" fill="#000"/><rect x="8" y="13" width="1" height="1" fill="#000"/><rect x="10" y="13" width="1" height="1" fill="#000"/></svg></div><div class="it ip" style="left:337px;top:213px">192.52.233.38</div><div class="ic" style="left:321px;top:230px"><svg width="16" height="16" viewBox="0 0 16 16" shape-rendering="crispEdges" ><rect x="3" y="0" width="9" height="9" fill="#000"/><rect x="4" y="1" width="7" height="6" fill="#FFFFFF"/><rect x="5" y="2" width="5" height="4" fill="#000"/><rect x="6" y="3" width="3" height="2" fill="#00FF00"/><rect x="0" y="8" width="15" height="4" fill="#000"/><rect x="1" y="12" width="13" height="4" fill="#000"/><rect x="1" y="9" width="13" height="3" fill="#FFFFFF"/><rect x="4" y="11" width="7" height="1" fill="#000"/><rect x="11" y="10" width="3" height="1" fill="#000"/><rect x="2" y="10" width="1" height="1" fill="#F00"/><rect x="4" y="12" width="7" height="1" fill="#FFFFFF"/><rect x="3" y="13" width="9" height="1" fill="#FFFFFF"/><rect x="2" y="14" width="11" height="1" fill="#FFFFFF"/><rect x="4" y="13" width="1" height="1" fill="#000"/><rect x="6" y="13" width="1" height="1" fill="#000"/><rect x="8" y="13" width="1" height="1" fill="#000"/><rect x="10" y="13" width="1" height="1" fill="#000"/></svg></div><div class="it ip" style="left:337px;top:230px">192.52.233.39</div><div class="ic" style="left:321px;top:247px"><svg width="16" height="16" viewBox="0 0 16 16" shape-rendering="crispEdges" ><rect x="2" y="2" width="1" height="1" fill="#808080"/><rect x="6" y="2" width="1" height="1" fill="#808080"/><rect x="2" y="3" width="5" height="1" fill="#000"/><rect x="1" y="4" width="11" height="1" fill="#000"/><rect x="1" y="5" width="11" height="1" fill="#000"/><rect x="1" y="6" width="11" height="1" fill="#000"/><rect x="1" y="7" width="14" height="1" fill="#000"/><rect x="1" y="8" width="14" height="1" fill="#000"/><rect x="1" y="9" width="13" height="1" fill="#000"/><rect x="2" y="10" width="12" height="1" fill="#000"/><rect x="3" y="11" width="10" height="1" fill="#000"/><rect x="2" y="4" width="1" height="1" fill="#FFFFFF"/><rect x="3" y="4" width="1" height="1" fill="#FFFF00"/><rect x="4" y="4" width="1" height="1" fill="#FFFFFF"/><rect x="5" y="4" width="1" height="1" fill="#FFFF00"/><rect x="6" y="4" width="1" height="1" fill="#FFFFFF"/><rect x="2" y="5" width="1" height="1" fill="#FFFF00"/><rect x="3" y="5" width="1" height="1" fill="#FFFFFF"/><rect x="4" y="5" width="1" height="1" fill="#FFFF00"/><rect x="5" y="5" width="1" height="1" fill="#FFFFFF"/><rect x="6" y="5" width="1" height="1" fill="#FFFF00"/><rect x="7" y="5" width="1" height="1" fill="#FFFFFF"/><rect x="8" y="5" width="1" height="1" fill="#FFFF00"/><rect x="9" y="5" width="1" height="1" fill="#FFFFFF"/><rect x="10" y="5" width="1" height="1" fill="#FFFF00"/><rect x="2" y="6" width="1" height="1" fill="#FFFFFF"/><rect x="3" y="6" width="1" height="1" fill="#FFFF00"/><rect x="4" y="6" width="1" height="1" fill="#FFFFFF"/><rect x="5" y="6" width="1" height="1" fill="#FFFF00"/><rect x="6" y="6" width="1" height="1" fill="#FFFFFF"/><rect x="7" y="6" width="1" height="1" fill="#FFFF00"/><rect x="8" y="6" width="1" height="1" fill="#FFFFFF"/><rect x="9" y="6" width="1" height="1" fill="#FFFF00"/><rect x="10" y="6" width="1" height="1" fill="#FFFFFF"/><rect x="2" y="7" width="1" height="1" fill="#FFFF00"/><rect x="3" y="7" width="1" height="1" fill="#FFFFFF"/><rect x="4" y="7" width="1" height="1" fill="#FFFF00"/><rect x="2" y="8" width="1" height="1" fill="#FFFFFF"/><rect x="3" y="8" width="1" height="1" fill="#FFFF00"/><rect x="2" y="9" width="1" height="1" fill="#FFFF00"/><rect x="5" y="8" width="1" height="1" fill="#FFFF00"/><rect x="6" y="8" width="1" height="1" fill="#FFFFFF"/><rect x="7" y="8" width="1" height="1" fill="#FFFF00"/><rect x="8" y="8" width="1" height="1" fill="#FFFFFF"/><rect x="9" y="8" width="1" height="1" fill="#FFFF00"/><rect x="10" y="8" width="1" height="1" fill="#FFFFFF"/><rect x="11" y="8" width="1" height="1" fill="#FFFF00"/><rect x="12" y="8" width="1" height="1" fill="#FFFFFF"/><rect x="13" y="8" width="1" height="1" fill="#FFFF00"/><rect x="4" y="9" width="1" height="1" fill="#FFFF00"/><rect x="5" y="9" width="1" height="1" fill="#FFFFFF"/><rect x="6" y="9" width="1" height="1" fill="#FFFF00"/><rect x="7" y="9" width="1" height="1" fill="#FFFFFF"/><rect x="8" y="9" width="1" height="1" fill="#FFFF00"/><rect x="9" y="9" width="1" height="1" fill="#FFFFFF"/><rect x="10" y="9" width="1" height="1" fill="#FFFF00"/><rect x="11" y="9" width="1" height="1" fill="#FFFFFF"/><rect x="12" y="9" width="1" height="1" fill="#FFFF00"/><rect x="3" y="10" width="1" height="1" fill="#FFFF00"/><rect x="4" y="10" width="1" height="1" fill="#FFFFFF"/><rect x="5" y="10" width="1" height="1" fill="#FFFF00"/><rect x="6" y="10" width="1" height="1" fill="#FFFFFF"/><rect x="7" y="10" width="1" height="1" fill="#FFFF00"/><rect x="8" y="10" width="1" height="1" fill="#FFFFFF"/><rect x="9" y="10" width="1" height="1" fill="#FFFF00"/><rect x="10" y="10" width="1" height="1" fill="#FFFFFF"/><rect x="11" y="10" width="1" height="1" fill="#FFFF00"/></svg></div><div class="it sel" style="left:337px;top:247px">Root<svg class="bs" width="6.5" height="10" viewBox="0 0 6.5 10"><path d="M1.2 0.6L5.6 9.4" stroke="currentColor" stroke-width="1.05" fill="none"/></svg>Europe<svg class="bs" width="6.5" height="10" viewBox="0 0 6.5 10"><path d="M1.2 0.6L5.6 9.4" stroke="currentColor" stroke-width="1.05" fill="none"/></svg></div><div class="ic" style="left:321px;top:264px"><svg width="16" height="16" viewBox="0 0 16 16" shape-rendering="crispEdges" ><rect x="3" y="0" width="9" height="9" fill="#000"/><rect x="4" y="1" width="7" height="6" fill="#FFFFFF"/><rect x="5" y="2" width="5" height="4" fill="#000"/><rect x="6" y="3" width="3" height="2" fill="#00FF00"/><rect x="0" y="8" width="15" height="4" fill="#000"/><rect x="1" y="12" width="13" height="4" fill="#000"/><rect x="1" y="9" width="13" height="3" fill="#FFFFFF"/><rect x="4" y="11" width="7" height="1" fill="#000"/><rect x="11" y="10" width="3" height="1" fill="#000"/><rect x="2" y="10" width="1" height="1" fill="#F00"/><rect x="4" y="12" width="7" height="1" fill="#FFFFFF"/><rect x="3" y="13" width="9" height="1" fill="#FFFFFF"/><rect x="2" y="14" width="11" height="1" fill="#FFFFFF"/><rect x="4" y="13" width="1" height="1" fill="#000"/><rect x="6" y="13" width="1" height="1" fill="#000"/><rect x="8" y="13" width="1" height="1" fill="#000"/><rect x="10" y="13" width="1" height="1" fill="#000"/></svg></div><div class="it" style="left:337px;top:264px">Main router</div><div class="ic" style="left:321px;top:281px"><svg width="16" height="16" viewBox="0 0 16 16" shape-rendering="crispEdges" ><rect x="2" y="2" width="1" height="1" fill="#808080"/><rect x="6" y="2" width="1" height="1" fill="#808080"/><rect x="2" y="3" width="5" height="1" fill="#000"/><rect x="1" y="4" width="11" height="1" fill="#000"/><rect x="1" y="5" width="11" height="1" fill="#000"/><rect x="1" y="6" width="11" height="1" fill="#000"/><rect x="1" y="7" width="14" height="1" fill="#000"/><rect x="1" y="8" width="14" height="1" fill="#000"/><rect x="1" y="9" width="13" height="1" fill="#000"/><rect x="2" y="10" width="12" height="1" fill="#000"/><rect x="3" y="11" width="10" height="1" fill="#000"/><rect x="2" y="4" width="1" height="1" fill="#FFFFFF"/><rect x="3" y="4" width="1" height="1" fill="#FFFF00"/><rect x="4" y="4" width="1" height="1" fill="#FFFFFF"/><rect x="5" y="4" width="1" height="1" fill="#FFFF00"/><rect x="6" y="4" width="1" height="1" fill="#FFFFFF"/><rect x="2" y="5" width="1" height="1" fill="#FFFF00"/><rect x="3" y="5" width="1" height="1" fill="#FFFFFF"/><rect x="4" y="5" width="1" height="1" fill="#FFFF00"/><rect x="5" y="5" width="1" height="1" fill="#FFFFFF"/><rect x="6" y="5" width="1" height="1" fill="#FFFF00"/><rect x="7" y="5" width="1" height="1" fill="#FFFFFF"/><rect x="8" y="5" width="1" height="1" fill="#FFFF00"/><rect x="9" y="5" width="1" height="1" fill="#FFFFFF"/><rect x="10" y="5" width="1" height="1" fill="#FFFF00"/><rect x="2" y="6" width="1" height="1" fill="#FFFFFF"/><rect x="3" y="6" width="1" height="1" fill="#FFFF00"/><rect x="4" y="6" width="1" height="1" fill="#FFFFFF"/><rect x="5" y="6" width="1" height="1" fill="#FFFF00"/><rect x="6" y="6" width="1" height="1" fill="#FFFFFF"/><rect x="7" y="6" width="1" height="1" fill="#FFFF00"/><rect x="8" y="6" width="1" height="1" fill="#FFFFFF"/><rect x="9" y="6" width="1" height="1" fill="#FFFF00"/><rect x="10" y="6" width="1" height="1" fill="#FFFFFF"/><rect x="2" y="7" width="1" height="1" fill="#FFFF00"/><rect x="3" y="7" width="1" height="1" fill="#FFFFFF"/><rect x="4" y="7" width="1" height="1" fill="#FFFF00"/><rect x="2" y="8" width="1" height="1" fill="#FFFFFF"/><rect x="3" y="8" width="1" height="1" fill="#FFFF00"/><rect x="2" y="9" width="1" height="1" fill="#FFFF00"/><rect x="5" y="8" width="1" height="1" fill="#FFFF00"/><rect x="6" y="8" width="1" height="1" fill="#FFFFFF"/><rect x="7" y="8" width="1" height="1" fill="#FFFF00"/><rect x="8" y="8" width="1" height="1" fill="#FFFFFF"/><rect x="9" y="8" width="1" height="1" fill="#FFFF00"/><rect x="10" y="8" width="1" height="1" fill="#FFFFFF"/><rect x="11" y="8" width="1" height="1" fill="#FFFF00"/><rect x="12" y="8" width="1" height="1" fill="#FFFFFF"/><rect x="13" y="8" width="1" height="1" fill="#FFFF00"/><rect x="4" y="9" width="1" height="1" fill="#FFFF00"/><rect x="5" y="9" width="1" height="1" fill="#FFFFFF"/><rect x="6" y="9" width="1" height="1" fill="#FFFF00"/><rect x="7" y="9" width="1" height="1" fill="#FFFFFF"/><rect x="8" y="9" width="1" height="1" fill="#FFFF00"/><rect x="9" y="9" width="1" height="1" fill="#FFFFFF"/><rect x="10" y="9" width="1" height="1" fill="#FFFF00"/><rect x="11" y="9" width="1" height="1" fill="#FFFFFF"/><rect x="12" y="9" width="1" height="1" fill="#FFFF00"/><rect x="3" y="10" width="1" height="1" fill="#FFFF00"/><rect x="4" y="10" width="1" height="1" fill="#FFFFFF"/><rect x="5" y="10" width="1" height="1" fill="#FFFF00"/><rect x="6" y="10" width="1" height="1" fill="#FFFFFF"/><rect x="7" y="10" width="1" height="1" fill="#FFFF00"/><rect x="8" y="10" width="1" height="1" fill="#FFFFFF"/><rect x="9" y="10" width="1" height="1" fill="#FFFF00"/><rect x="10" y="10" width="1" height="1" fill="#FFFFFF"/><rect x="11" y="10" width="1" height="1" fill="#FFFF00"/></svg></div><div class="it sel" style="left:337px;top:281px">Root<svg class="bs" width="6.5" height="10" viewBox="0 0 6.5 10"><path d="M1.2 0.6L5.6 9.4" stroke="currentColor" stroke-width="1.05" fill="none"/></svg>Europe<svg class="bs" width="6.5" height="10" viewBox="0 0 6.5 10"><path d="M1.2 0.6L5.6 9.4" stroke="currentColor" stroke-width="1.05" fill="none"/></svg>CPU Usage<svg class="bs" width="6.5" height="10" viewBox="0 0 6.5 10"><path d="M1.2 0.6L5.6 9.4" stroke="currentColor" stroke-width="1.05" fill="none"/></svg></div><div class="ic" style="left:321px;top:298px"><svg width="16" height="16" viewBox="0 0 16 16" shape-rendering="crispEdges" ><rect x="7" y="0" width="1" height="2" fill="#00FF00"/><rect x="0" y="7" width="2" height="1" fill="#00FF00"/><rect x="13" y="7" width="2" height="1" fill="#00FF00"/><rect x="2" y="2" width="1" height="1" fill="#00FF00"/><rect x="12" y="2" width="1" height="1" fill="#00FF00"/><rect x="2" y="12" width="1" height="1" fill="#00FF00"/><rect x="12" y="12" width="1" height="1" fill="#00FF00"/><rect x="5" y="2" width="5" height="1" fill="#00FF00"/><rect x="4" y="3" width="8" height="1" fill="#00FF00"/><rect x="3" y="4" width="10" height="7" fill="#00FF00"/><rect x="4" y="11" width="8" height="1" fill="#00FF00"/><rect x="5" y="12" width="6" height="1" fill="#00FF00"/><rect x="5" y="4" width="5" height="1" fill="#000"/><rect x="4" y="5" width="7" height="5" fill="#000"/><rect x="5" y="10" width="5" height="1" fill="#000"/><rect x="6" y="10" width="3" height="6" fill="#000"/><rect x="6" y="5" width="1" height="1" fill="#00E000"/><rect x="7" y="5" width="1" height="1" fill="#FFF"/><rect x="8" y="5" width="1" height="1" fill="#00E000"/><rect x="5" y="6" width="1" height="1" fill="#00E000"/><rect x="6" y="6" width="1" height="1" fill="#FFF"/><rect x="7" y="6" width="1" height="1" fill="#00E000"/><rect x="8" y="6" width="1" height="1" fill="#FFF"/><rect x="9" y="6" width="1" height="1" fill="#00E000"/><rect x="5" y="7" width="1" height="1" fill="#FFF"/><rect x="6" y="7" width="1" height="1" fill="#00E000"/><rect x="7" y="7" width="1" height="1" fill="#FFF"/><rect x="8" y="7" width="1" height="1" fill="#00E000"/><rect x="9" y="7" width="1" height="1" fill="#FFF"/><rect x="5" y="8" width="1" height="1" fill="#00E000"/><rect x="6" y="8" width="1" height="1" fill="#FFF"/><rect x="7" y="8" width="1" height="1" fill="#00E000"/><rect x="8" y="8" width="1" height="1" fill="#FFF"/><rect x="9" y="8" width="1" height="1" fill="#00E000"/><rect x="6" y="9" width="1" height="1" fill="#00E000"/><rect x="7" y="9" width="1" height="1" fill="#FFF"/><rect x="8" y="9" width="1" height="1" fill="#00E000"/><rect x="7" y="6" width="1" height="4" fill="#A0A0A0"/><rect x="7" y="13" width="1" height="1" fill="#FFF"/></svg></div><div class="it" style="left:337px;top:298px">CPU (critical - 90%)</div><div class="ic" style="left:321px;top:315px"><svg width="16" height="16" viewBox="0 0 16 16" shape-rendering="crispEdges" ><rect x="3" y="0" width="9" height="9" fill="#000"/><rect x="4" y="1" width="7" height="6" fill="#E8E8E8"/><rect x="5" y="2" width="5" height="4" fill="#000"/><rect x="6" y="3" width="3" height="2" fill="#E8E8E8"/><rect x="0" y="8" width="15" height="4" fill="#000"/><rect x="1" y="12" width="13" height="4" fill="#000"/><rect x="1" y="9" width="13" height="3" fill="#E8E8E8"/><rect x="4" y="11" width="7" height="1" fill="#000"/><rect x="11" y="10" width="3" height="1" fill="#000"/><rect x="2" y="10" width="1" height="1" fill="#000"/><rect x="4" y="12" width="7" height="1" fill="#E8E8E8"/><rect x="3" y="13" width="9" height="1" fill="#E8E8E8"/><rect x="2" y="14" width="11" height="1" fill="#E8E8E8"/><rect x="4" y="13" width="1" height="1" fill="#000"/><rect x="6" y="13" width="1" height="1" fill="#000"/><rect x="8" y="13" width="1" height="1" fill="#000"/><rect x="10" y="13" width="1" height="1" fill="#000"/><rect x="5" y="2" width="5" height="1" fill="#FF0000"/><rect x="4" y="3" width="2" height="2" fill="#FF0000"/><rect x="9" y="3" width="2" height="3" fill="#FF0000"/><rect x="8" y="6" width="2" height="1" fill="#FF0000"/><rect x="7" y="7" width="2" height="4" fill="#FF0000"/><rect x="7" y="12" width="2" height="3" fill="#FF0000"/><rect x="6" y="13" width="4" height="1" fill="#FF0000"/></svg></div><div class="it yel" style="left:337px;top:315px">CPU <svg class="bs" width="6.5" height="10" viewBox="0 0 6.5 10"><path d="M1.2 0.6L5.6 9.4" stroke="currentColor" stroke-width="1.05" fill="none"/></svg><svg class="bs" width="6.5" height="10" viewBox="0 0 6.5 10"><path d="M1.2 0.6L5.6 9.4" stroke="currentColor" stroke-width="1.05" fill="none"/></svg>server1</div><div class="ic" style="left:321px;top:332px"><svg width="16" height="16" viewBox="0 0 16 16" shape-rendering="crispEdges" ><rect x="7" y="0" width="1" height="2" fill="#00FF00"/><rect x="0" y="7" width="2" height="1" fill="#00FF00"/><rect x="13" y="7" width="2" height="1" fill="#00FF00"/><rect x="2" y="2" width="1" height="1" fill="#00FF00"/><rect x="12" y="2" width="1" height="1" fill="#00FF00"/><rect x="2" y="12" width="1" height="1" fill="#00FF00"/><rect x="12" y="12" width="1" height="1" fill="#00FF00"/><rect x="5" y="2" width="5" height="1" fill="#00FF00"/><rect x="4" y="3" width="8" height="1" fill="#00FF00"/><rect x="3" y="4" width="10" height="7" fill="#00FF00"/><rect x="4" y="11" width="8" height="1" fill="#00FF00"/><rect x="5" y="12" width="6" height="1" fill="#00FF00"/><rect x="5" y="4" width="5" height="1" fill="#000"/><rect x="4" y="5" width="7" height="5" fill="#000"/><rect x="5" y="10" width="5" height="1" fill="#000"/><rect x="6" y="10" width="3" height="6" fill="#000"/><rect x="6" y="5" width="1" height="1" fill="#00E000"/><rect x="7" y="5" width="1" height="1" fill="#FFF"/><rect x="8" y="5" width="1" height="1" fill="#00E000"/><rect x="5" y="6" width="1" height="1" fill="#00E000"/><rect x="6" y="6" width="1" height="1" fill="#FFF"/><rect x="7" y="6" width="1" height="1" fill="#00E000"/><rect x="8" y="6" width="1" height="1" fill="#FFF"/><rect x="9" y="6" width="1" height="1" fill="#00E000"/><rect x="5" y="7" width="1" height="1" fill="#FFF"/><rect x="6" y="7" width="1" height="1" fill="#00E000"/><rect x="7" y="7" width="1" height="1" fill="#FFF"/><rect x="8" y="7" width="1" height="1" fill="#00E000"/><rect x="9" y="7" width="1" height="1" fill="#FFF"/><rect x="5" y="8" width="1" height="1" fill="#00E000"/><rect x="6" y="8" width="1" height="1" fill="#FFF"/><rect x="7" y="8" width="1" height="1" fill="#00E000"/><rect x="8" y="8" width="1" height="1" fill="#FFF"/><rect x="9" y="8" width="1" height="1" fill="#00E000"/><rect x="6" y="9" width="1" height="1" fill="#00E000"/><rect x="7" y="9" width="1" height="1" fill="#FFF"/><rect x="8" y="9" width="1" height="1" fill="#00E000"/><rect x="7" y="6" width="1" height="4" fill="#A0A0A0"/><rect x="7" y="13" width="1" height="1" fill="#FFF"/></svg></div><div class="it" style="left:337px;top:332px">CPU &lt;local computer&gt;</div><div class="ic" style="left:321px;top:349px"><svg width="16" height="16" viewBox="0 0 16 16" shape-rendering="crispEdges" ><rect x="2" y="2" width="1" height="1" fill="#808080"/><rect x="6" y="2" width="1" height="1" fill="#808080"/><rect x="2" y="3" width="5" height="1" fill="#000"/><rect x="1" y="4" width="11" height="1" fill="#000"/><rect x="1" y="5" width="11" height="1" fill="#000"/><rect x="1" y="6" width="11" height="1" fill="#000"/><rect x="1" y="7" width="14" height="1" fill="#000"/><rect x="1" y="8" width="14" height="1" fill="#000"/><rect x="1" y="9" width="13" height="1" fill="#000"/><rect x="2" y="10" width="12" height="1" fill="#000"/><rect x="3" y="11" width="10" height="1" fill="#000"/><rect x="2" y="4" width="1" height="1" fill="#FFFFFF"/><rect x="3" y="4" width="1" height="1" fill="#FFFF00"/><rect x="4" y="4" width="1" height="1" fill="#FFFFFF"/><rect x="5" y="4" width="1" height="1" fill="#FFFF00"/><rect x="6" y="4" width="1" height="1" fill="#FFFFFF"/><rect x="2" y="5" width="1" height="1" fill="#FFFF00"/><rect x="3" y="5" width="1" height="1" fill="#FFFFFF"/><rect x="4" y="5" width="1" height="1" fill="#FFFF00"/><rect x="5" y="5" width="1" height="1" fill="#FFFFFF"/><rect x="6" y="5" width="1" height="1" fill="#FFFF00"/><rect x="7" y="5" width="1" height="1" fill="#FFFFFF"/><rect x="8" y="5" width="1" height="1" fill="#FFFF00"/><rect x="9" y="5" width="1" height="1" fill="#FFFFFF"/><rect x="10" y="5" width="1" height="1" fill="#FFFF00"/><rect x="2" y="6" width="1" height="1" fill="#FFFFFF"/><rect x="3" y="6" width="1" height="1" fill="#FFFF00"/><rect x="4" y="6" width="1" height="1" fill="#FFFFFF"/><rect x="5" y="6" width="1" height="1" fill="#FFFF00"/><rect x="6" y="6" width="1" height="1" fill="#FFFFFF"/><rect x="7" y="6" width="1" height="1" fill="#FFFF00"/><rect x="8" y="6" width="1" height="1" fill="#FFFFFF"/><rect x="9" y="6" width="1" height="1" fill="#FFFF00"/><rect x="10" y="6" width="1" height="1" fill="#FFFFFF"/><rect x="2" y="7" width="1" height="1" fill="#FFFF00"/><rect x="3" y="7" width="1" height="1" fill="#FFFFFF"/><rect x="4" y="7" width="1" height="1" fill="#FFFF00"/><rect x="2" y="8" width="1" height="1" fill="#FFFFFF"/><rect x="3" y="8" width="1" height="1" fill="#FFFF00"/><rect x="2" y="9" width="1" height="1" fill="#FFFF00"/><rect x="5" y="8" width="1" height="1" fill="#FFFF00"/><rect x="6" y="8" width="1" height="1" fill="#FFFFFF"/><rect x="7" y="8" width="1" height="1" fill="#FFFF00"/><rect x="8" y="8" width="1" height="1" fill="#FFFFFF"/><rect x="9" y="8" width="1" height="1" fill="#FFFF00"/><rect x="10" y="8" width="1" height="1" fill="#FFFFFF"/><rect x="11" y="8" width="1" height="1" fill="#FFFF00"/><rect x="12" y="8" width="1" height="1" fill="#FFFFFF"/><rect x="13" y="8" width="1" height="1" fill="#FFFF00"/><rect x="4" y="9" width="1" height="1" fill="#FFFF00"/><rect x="5" y="9" width="1" height="1" fill="#FFFFFF"/><rect x="6" y="9" width="1" height="1" fill="#FFFF00"/><rect x="7" y="9" width="1" height="1" fill="#FFFFFF"/><rect x="8" y="9" width="1" height="1" fill="#FFFF00"/><rect x="9" y="9" width="1" height="1" fill="#FFFFFF"/><rect x="10" y="9" width="1" height="1" fill="#FFFF00"/><rect x="11" y="9" width="1" height="1" fill="#FFFFFF"/><rect x="12" y="9" width="1" height="1" fill="#FFFF00"/><rect x="3" y="10" width="1" height="1" fill="#FFFF00"/><rect x="4" y="10" width="1" height="1" fill="#FFFFFF"/><rect x="5" y="10" width="1" height="1" fill="#FFFF00"/><rect x="6" y="10" width="1" height="1" fill="#FFFFFF"/><rect x="7" y="10" width="1" height="1" fill="#FFFF00"/><rect x="8" y="10" width="1" height="1" fill="#FFFFFF"/><rect x="9" y="10" width="1" height="1" fill="#FFFF00"/><rect x="10" y="10" width="1" height="1" fill="#FFFFFF"/><rect x="11" y="10" width="1" height="1" fill="#FFFF00"/></svg></div><div class="it sel" style="left:337px;top:349px">Root<svg class="bs" width="6.5" height="10" viewBox="0 0 6.5 10"><path d="M1.2 0.6L5.6 9.4" stroke="currentColor" stroke-width="1.05" fill="none"/></svg>xx<svg class="bs" width="6.5" height="10" viewBox="0 0 6.5 10"><path d="M1.2 0.6L5.6 9.4" stroke="currentColor" stroke-width="1.05" fill="none"/></svg></div><div class="ic" style="left:321px;top:366px"><svg width="16" height="16" viewBox="0 0 16 16" shape-rendering="crispEdges" ><rect x="7" y="0" width="1" height="2" fill="#00FF00"/><rect x="0" y="7" width="2" height="1" fill="#00FF00"/><rect x="13" y="7" width="2" height="1" fill="#00FF00"/><rect x="2" y="2" width="1" height="1" fill="#00FF00"/><rect x="12" y="2" width="1" height="1" fill="#00FF00"/><rect x="2" y="12" width="1" height="1" fill="#00FF00"/><rect x="12" y="12" width="1" height="1" fill="#00FF00"/><rect x="5" y="2" width="5" height="1" fill="#00FF00"/><rect x="4" y="3" width="8" height="1" fill="#00FF00"/><rect x="3" y="4" width="10" height="7" fill="#00FF00"/><rect x="4" y="11" width="8" height="1" fill="#00FF00"/><rect x="5" y="12" width="6" height="1" fill="#00FF00"/><rect x="5" y="4" width="5" height="1" fill="#000"/><rect x="4" y="5" width="7" height="5" fill="#000"/><rect x="5" y="10" width="5" height="1" fill="#000"/><rect x="6" y="10" width="3" height="6" fill="#000"/><rect x="6" y="5" width="1" height="1" fill="#00E000"/><rect x="7" y="5" width="1" height="1" fill="#FFF"/><rect x="8" y="5" width="1" height="1" fill="#00E000"/><rect x="5" y="6" width="1" height="1" fill="#00E000"/><rect x="6" y="6" width="1" height="1" fill="#FFF"/><rect x="7" y="6" width="1" height="1" fill="#00E000"/><rect x="8" y="6" width="1" height="1" fill="#FFF"/><rect x="9" y="6" width="1" height="1" fill="#00E000"/><rect x="5" y="7" width="1" height="1" fill="#FFF"/><rect x="6" y="7" width="1" height="1" fill="#00E000"/><rect x="7" y="7" width="1" height="1" fill="#FFF"/><rect x="8" y="7" width="1" height="1" fill="#00E000"/><rect x="9" y="7" width="1" height="1" fill="#FFF"/><rect x="5" y="8" width="1" height="1" fill="#00E000"/><rect x="6" y="8" width="1" height="1" fill="#FFF"/><rect x="7" y="8" width="1" height="1" fill="#00E000"/><rect x="8" y="8" width="1" height="1" fill="#FFF"/><rect x="9" y="8" width="1" height="1" fill="#00E000"/><rect x="6" y="9" width="1" height="1" fill="#00E000"/><rect x="7" y="9" width="1" height="1" fill="#FFF"/><rect x="8" y="9" width="1" height="1" fill="#00E000"/><rect x="7" y="6" width="1" height="4" fill="#A0A0A0"/><rect x="7" y="13" width="1" height="1" fill="#FFF"/></svg></div><div class="it" style="left:337px;top:366px"><svg class="bs" width="6.5" height="10" viewBox="0 0 6.5 10"><path d="M1.2 0.6L5.6 9.4" stroke="currentColor" stroke-width="1.05" fill="none"/></svg>docs</div><div class="ic" style="left:478px;top:94px"><svg width="16" height="16" viewBox="0 0 16 16" shape-rendering="crispEdges" ><rect x="7" y="0" width="1" height="2" fill="#00FF00"/><rect x="0" y="7" width="2" height="1" fill="#00FF00"/><rect x="13" y="7" width="2" height="1" fill="#00FF00"/><rect x="2" y="2" width="1" height="1" fill="#00FF00"/><rect x="12" y="2" width="1" height="1" fill="#00FF00"/><rect x="2" y="12" width="1" height="1" fill="#00FF00"/><rect x="12" y="12" width="1" height="1" fill="#00FF00"/><rect x="5" y="2" width="5" height="1" fill="#00FF00"/><rect x="4" y="3" width="8" height="1" fill="#00FF00"/><rect x="3" y="4" width="10" height="7" fill="#00FF00"/><rect x="4" y="11" width="8" height="1" fill="#00FF00"/><rect x="5" y="12" width="6" height="1" fill="#00FF00"/><rect x="5" y="4" width="5" height="1" fill="#000"/><rect x="4" y="5" width="7" height="5" fill="#000"/><rect x="5" y="10" width="5" height="1" fill="#000"/><rect x="6" y="10" width="3" height="6" fill="#000"/><rect x="6" y="5" width="1" height="1" fill="#00E000"/><rect x="7" y="5" width="1" height="1" fill="#FFF"/><rect x="8" y="5" width="1" height="1" fill="#00E000"/><rect x="5" y="6" width="1" height="1" fill="#00E000"/><rect x="6" y="6" width="1" height="1" fill="#FFF"/><rect x="7" y="6" width="1" height="1" fill="#00E000"/><rect x="8" y="6" width="1" height="1" fill="#FFF"/><rect x="9" y="6" width="1" height="1" fill="#00E000"/><rect x="5" y="7" width="1" height="1" fill="#FFF"/><rect x="6" y="7" width="1" height="1" fill="#00E000"/><rect x="7" y="7" width="1" height="1" fill="#FFF"/><rect x="8" y="7" width="1" height="1" fill="#00E000"/><rect x="9" y="7" width="1" height="1" fill="#FFF"/><rect x="5" y="8" width="1" height="1" fill="#00E000"/><rect x="6" y="8" width="1" height="1" fill="#FFF"/><rect x="7" y="8" width="1" height="1" fill="#00E000"/><rect x="8" y="8" width="1" height="1" fill="#FFF"/><rect x="9" y="8" width="1" height="1" fill="#00E000"/><rect x="6" y="9" width="1" height="1" fill="#00E000"/><rect x="7" y="9" width="1" height="1" fill="#FFF"/><rect x="8" y="9" width="1" height="1" fill="#00E000"/><rect x="7" y="6" width="1" height="4" fill="#A0A0A0"/><rect x="7" y="13" width="1" height="1" fill="#FFF"/></svg></div><div class="it" style="left:494px;top:94px"><svg class="bs" width="6.5" height="10" viewBox="0 0 6.5 10"><path d="M1.2 0.6L5.6 9.4" stroke="currentColor" stroke-width="1.05" fill="none"/></svg>syslog.htm</div><div class="ic" style="left:478px;top:111px"><svg width="16" height="16" viewBox="0 0 16 16" shape-rendering="crispEdges" ><rect x="3" y="0" width="9" height="9" fill="#000"/><rect x="4" y="1" width="7" height="6" fill="#FFFFFF"/><rect x="5" y="2" width="5" height="4" fill="#000"/><rect x="6" y="3" width="3" height="2" fill="#00FF00"/><rect x="0" y="8" width="15" height="4" fill="#000"/><rect x="1" y="12" width="13" height="4" fill="#000"/><rect x="1" y="9" width="13" height="3" fill="#FFFFFF"/><rect x="4" y="11" width="7" height="1" fill="#000"/><rect x="11" y="10" width="3" height="1" fill="#000"/><rect x="2" y="10" width="1" height="1" fill="#F00"/><rect x="4" y="12" width="7" height="1" fill="#FFFFFF"/><rect x="3" y="13" width="9" height="1" fill="#FFFFFF"/><rect x="2" y="14" width="11" height="1" fill="#FFFFFF"/><rect x="4" y="13" width="1" height="1" fill="#000"/><rect x="6" y="13" width="1" height="1" fill="#000"/><rect x="8" y="13" width="1" height="1" fill="#000"/><rect x="10" y="13" width="1" height="1" fill="#000"/></svg></div><div class="it ip" style="left:494px;top:111px">192.52.233.48</div><div class="ic" style="left:478px;top:128px"><svg width="16" height="16" viewBox="0 0 16 16" shape-rendering="crispEdges" ><rect x="3" y="0" width="9" height="9" fill="#000"/><rect x="4" y="1" width="7" height="6" fill="#FF0000"/><rect x="5" y="2" width="5" height="4" fill="#000"/><rect x="6" y="3" width="3" height="2" fill="#FFFFFF"/><rect x="0" y="8" width="15" height="4" fill="#000"/><rect x="1" y="12" width="13" height="4" fill="#000"/><rect x="1" y="9" width="13" height="3" fill="#FF0000"/><rect x="4" y="11" width="7" height="1" fill="#000"/><rect x="11" y="10" width="3" height="1" fill="#000"/><rect x="2" y="10" width="1" height="1" fill="#000"/><rect x="4" y="12" width="7" height="1" fill="#FF0000"/><rect x="3" y="13" width="9" height="1" fill="#FF0000"/><rect x="2" y="14" width="11" height="1" fill="#FF0000"/><rect x="4" y="13" width="1" height="1" fill="#000"/><rect x="6" y="13" width="1" height="1" fill="#000"/><rect x="8" y="13" width="1" height="1" fill="#000"/><rect x="10" y="13" width="1" height="1" fill="#000"/></svg></div><div class="it red" style="left:494px;top:128px">DNS:&nbsp; 123.32.23.4</div><div class="ic" style="left:478px;top:145px"><svg width="16" height="16" viewBox="0 0 16 16" shape-rendering="crispEdges" ><rect x="3" y="0" width="9" height="9" fill="#000"/><rect x="4" y="1" width="7" height="6" fill="#FF0000"/><rect x="5" y="2" width="5" height="4" fill="#000"/><rect x="6" y="3" width="3" height="2" fill="#FFFFFF"/><rect x="0" y="8" width="15" height="4" fill="#000"/><rect x="1" y="12" width="13" height="4" fill="#000"/><rect x="1" y="9" width="13" height="3" fill="#FF0000"/><rect x="4" y="11" width="7" height="1" fill="#000"/><rect x="11" y="10" width="3" height="1" fill="#000"/><rect x="2" y="10" width="1" height="1" fill="#000"/><rect x="4" y="12" width="7" height="1" fill="#FF0000"/><rect x="3" y="13" width="9" height="1" fill="#FF0000"/><rect x="2" y="14" width="11" height="1" fill="#FF0000"/><rect x="4" y="13" width="1" height="1" fill="#000"/><rect x="6" y="13" width="1" height="1" fill="#000"/><rect x="8" y="13" width="1" height="1" fill="#000"/><rect x="10" y="13" width="1" height="1" fill="#000"/></svg></div><div class="it red" style="left:494px;top:145px">IMAP: pop.cadvision.com</div><div class="ic" style="left:478px;top:162px"><svg width="16" height="16" viewBox="0 0 16 16" shape-rendering="crispEdges" ><rect x="3" y="0" width="9" height="9" fill="#000"/><rect x="4" y="1" width="7" height="6" fill="#FF0000"/><rect x="5" y="2" width="5" height="4" fill="#000"/><rect x="6" y="3" width="3" height="2" fill="#FFFFFF"/><rect x="0" y="8" width="15" height="4" fill="#000"/><rect x="1" y="12" width="13" height="4" fill="#000"/><rect x="1" y="9" width="13" height="3" fill="#FF0000"/><rect x="4" y="11" width="7" height="1" fill="#000"/><rect x="11" y="10" width="3" height="1" fill="#000"/><rect x="2" y="10" width="1" height="1" fill="#000"/><rect x="4" y="12" width="7" height="1" fill="#FF0000"/><rect x="3" y="13" width="9" height="1" fill="#FF0000"/><rect x="2" y="14" width="11" height="1" fill="#FF0000"/><rect x="4" y="13" width="1" height="1" fill="#000"/><rect x="6" y="13" width="1" height="1" fill="#000"/><rect x="8" y="13" width="1" height="1" fill="#000"/><rect x="10" y="13" width="1" height="1" fill="#000"/></svg></div><div class="it red" style="left:494px;top:162px">LDAP: bigfoot.com</div><div class="ic" style="left:478px;top:179px"><svg width="16" height="16" viewBox="0 0 16 16" shape-rendering="crispEdges" ><rect x="7" y="0" width="1" height="2" fill="#00FF00"/><rect x="0" y="7" width="2" height="1" fill="#00FF00"/><rect x="13" y="7" width="2" height="1" fill="#00FF00"/><rect x="2" y="2" width="1" height="1" fill="#00FF00"/><rect x="12" y="2" width="1" height="1" fill="#00FF00"/><rect x="2" y="12" width="1" height="1" fill="#00FF00"/><rect x="12" y="12" width="1" height="1" fill="#00FF00"/><rect x="5" y="2" width="5" height="1" fill="#00FF00"/><rect x="4" y="3" width="8" height="1" fill="#00FF00"/><rect x="3" y="4" width="10" height="7" fill="#00FF00"/><rect x="4" y="11" width="8" height="1" fill="#00FF00"/><rect x="5" y="12" width="6" height="1" fill="#00FF00"/><rect x="5" y="4" width="5" height="1" fill="#000"/><rect x="4" y="5" width="7" height="5" fill="#000"/><rect x="5" y="10" width="5" height="1" fill="#000"/><rect x="6" y="10" width="3" height="6" fill="#000"/><rect x="6" y="5" width="1" height="1" fill="#00E000"/><rect x="7" y="5" width="1" height="1" fill="#FFF"/><rect x="8" y="5" width="1" height="1" fill="#00E000"/><rect x="5" y="6" width="1" height="1" fill="#00E000"/><rect x="6" y="6" width="1" height="1" fill="#FFF"/><rect x="7" y="6" width="1" height="1" fill="#00E000"/><rect x="8" y="6" width="1" height="1" fill="#FFF"/><rect x="9" y="6" width="1" height="1" fill="#00E000"/><rect x="5" y="7" width="1" height="1" fill="#FFF"/><rect x="6" y="7" width="1" height="1" fill="#00E000"/><rect x="7" y="7" width="1" height="1" fill="#FFF"/><rect x="8" y="7" width="1" height="1" fill="#00E000"/><rect x="9" y="7" width="1" height="1" fill="#FFF"/><rect x="5" y="8" width="1" height="1" fill="#00E000"/><rect x="6" y="8" width="1" height="1" fill="#FFF"/><rect x="7" y="8" width="1" height="1" fill="#00E000"/><rect x="8" y="8" width="1" height="1" fill="#FFF"/><rect x="9" y="8" width="1" height="1" fill="#00E000"/><rect x="6" y="9" width="1" height="1" fill="#00E000"/><rect x="7" y="9" width="1" height="1" fill="#FFF"/><rect x="8" y="9" width="1" height="1" fill="#00E000"/><rect x="7" y="6" width="1" height="4" fill="#A0A0A0"/><rect x="7" y="13" width="1" height="1" fill="#FFF"/></svg></div><div class="it" style="left:494px;top:179px">ODBC: dBASE Files</div><div class="ic" style="left:478px;top:196px"><svg width="16" height="16" viewBox="0 0 16 16" shape-rendering="crispEdges" ><rect x="7" y="0" width="1" height="2" fill="#FF0000"/><rect x="0" y="7" width="2" height="1" fill="#FF0000"/><rect x="13" y="7" width="2" height="1" fill="#FF0000"/><rect x="2" y="2" width="1" height="1" fill="#FF0000"/><rect x="12" y="2" width="1" height="1" fill="#FF0000"/><rect x="2" y="12" width="1" height="1" fill="#FF0000"/><rect x="12" y="12" width="1" height="1" fill="#FF0000"/><rect x="5" y="2" width="5" height="1" fill="#FF0000"/><rect x="4" y="3" width="8" height="1" fill="#FF0000"/><rect x="3" y="4" width="10" height="7" fill="#FF0000"/><rect x="4" y="11" width="8" height="1" fill="#FF0000"/><rect x="5" y="12" width="6" height="1" fill="#FF0000"/><rect x="5" y="4" width="5" height="1" fill="#000"/><rect x="4" y="5" width="7" height="5" fill="#000"/><rect x="5" y="10" width="5" height="1" fill="#000"/><rect x="6" y="10" width="3" height="6" fill="#000"/><rect x="6" y="5" width="1" height="1" fill="#F04040"/><rect x="7" y="5" width="1" height="1" fill="#FFF"/><rect x="8" y="5" width="1" height="1" fill="#F04040"/><rect x="5" y="6" width="1" height="1" fill="#F04040"/><rect x="6" y="6" width="1" height="1" fill="#FFF"/><rect x="7" y="6" width="1" height="1" fill="#F04040"/><rect x="8" y="6" width="1" height="1" fill="#FFF"/><rect x="9" y="6" width="1" height="1" fill="#F04040"/><rect x="5" y="7" width="1" height="1" fill="#FFF"/><rect x="6" y="7" width="1" height="1" fill="#F04040"/><rect x="7" y="7" width="1" height="1" fill="#FFF"/><rect x="8" y="7" width="1" height="1" fill="#F04040"/><rect x="9" y="7" width="1" height="1" fill="#FFF"/><rect x="5" y="8" width="1" height="1" fill="#F04040"/><rect x="6" y="8" width="1" height="1" fill="#FFF"/><rect x="7" y="8" width="1" height="1" fill="#F04040"/><rect x="8" y="8" width="1" height="1" fill="#FFF"/><rect x="9" y="8" width="1" height="1" fill="#F04040"/><rect x="6" y="9" width="1" height="1" fill="#F04040"/><rect x="7" y="9" width="1" height="1" fill="#FFF"/><rect x="8" y="9" width="1" height="1" fill="#F04040"/><rect x="7" y="6" width="1" height="4" fill="#A0A0A0"/><rect x="7" y="13" width="1" height="1" fill="#FFF"/></svg></div><div class="it red" style="left:494px;top:196px">POP3: pop.cadvision.com</div><div class="ic" style="left:478px;top:213px"><svg width="16" height="16" viewBox="0 0 16 16" shape-rendering="crispEdges" ><rect x="3" y="0" width="9" height="9" fill="#000"/><rect x="4" y="1" width="7" height="6" fill="#FFFFFF"/><rect x="5" y="2" width="5" height="4" fill="#000"/><rect x="6" y="3" width="3" height="2" fill="#00FF00"/><rect x="0" y="8" width="15" height="4" fill="#000"/><rect x="1" y="12" width="13" height="4" fill="#000"/><rect x="1" y="9" width="13" height="3" fill="#FFFFFF"/><rect x="4" y="11" width="7" height="1" fill="#000"/><rect x="11" y="10" width="3" height="1" fill="#000"/><rect x="2" y="10" width="1" height="1" fill="#F00"/><rect x="4" y="12" width="7" height="1" fill="#FFFFFF"/><rect x="3" y="13" width="9" height="1" fill="#FFFFFF"/><rect x="2" y="14" width="11" height="1" fill="#FFFFFF"/><rect x="4" y="13" width="1" height="1" fill="#000"/><rect x="6" y="13" width="1" height="1" fill="#000"/><rect x="8" y="13" width="1" height="1" fill="#000"/><rect x="10" y="13" width="1" height="1" fill="#000"/></svg></div><div class="it" style="left:494px;top:213px">SMTP: smtp.cadvision.com</div><div class="ic" style="left:478px;top:230px"><svg width="16" height="16" viewBox="0 0 16 16" shape-rendering="crispEdges" ><rect x="7" y="0" width="1" height="2" fill="#00FF00"/><rect x="0" y="7" width="2" height="1" fill="#00FF00"/><rect x="13" y="7" width="2" height="1" fill="#00FF00"/><rect x="2" y="2" width="1" height="1" fill="#00FF00"/><rect x="12" y="2" width="1" height="1" fill="#00FF00"/><rect x="2" y="12" width="1" height="1" fill="#00FF00"/><rect x="12" y="12" width="1" height="1" fill="#00FF00"/><rect x="5" y="2" width="5" height="1" fill="#00FF00"/><rect x="4" y="3" width="8" height="1" fill="#00FF00"/><rect x="3" y="4" width="10" height="7" fill="#00FF00"/><rect x="4" y="11" width="8" height="1" fill="#00FF00"/><rect x="5" y="12" width="6" height="1" fill="#00FF00"/><rect x="5" y="4" width="5" height="1" fill="#000"/><rect x="4" y="5" width="7" height="5" fill="#000"/><rect x="5" y="10" width="5" height="1" fill="#000"/><rect x="6" y="10" width="3" height="6" fill="#000"/><rect x="6" y="5" width="1" height="1" fill="#00E000"/><rect x="7" y="5" width="1" height="1" fill="#FFF"/><rect x="8" y="5" width="1" height="1" fill="#00E000"/><rect x="5" y="6" width="1" height="1" fill="#00E000"/><rect x="6" y="6" width="1" height="1" fill="#FFF"/><rect x="7" y="6" width="1" height="1" fill="#00E000"/><rect x="8" y="6" width="1" height="1" fill="#FFF"/><rect x="9" y="6" width="1" height="1" fill="#00E000"/><rect x="5" y="7" width="1" height="1" fill="#FFF"/><rect x="6" y="7" width="1" height="1" fill="#00E000"/><rect x="7" y="7" width="1" height="1" fill="#FFF"/><rect x="8" y="7" width="1" height="1" fill="#00E000"/><rect x="9" y="7" width="1" height="1" fill="#FFF"/><rect x="5" y="8" width="1" height="1" fill="#00E000"/><rect x="6" y="8" width="1" height="1" fill="#FFF"/><rect x="7" y="8" width="1" height="1" fill="#00E000"/><rect x="8" y="8" width="1" height="1" fill="#FFF"/><rect x="9" y="8" width="1" height="1" fill="#00E000"/><rect x="6" y="9" width="1" height="1" fill="#00E000"/><rect x="7" y="9" width="1" height="1" fill="#FFF"/><rect x="8" y="9" width="1" height="1" fill="#00E000"/><rect x="7" y="6" width="1" height="4" fill="#A0A0A0"/><rect x="7" y="13" width="1" height="1" fill="#FFF"/></svg></div><div class="it ip" style="left:494px;top:230px">SNMP 1.3.6.1.2.1.1.3.0</div>
<!-- lower panel -->
<div style="left:5px;top:414px;width:929px;height:245px;border-top:1px solid #808080;border-left:1px solid #808080;border-right:1px solid #fff;border-bottom:1px solid #fff"></div>
<div style="left:6px;top:415px;width:927px;height:243px;border-top:1px solid #404040;border-left:1px solid #404040;border-right:1px solid #D4D0C8;border-bottom:1px solid #D4D0C8;background:#000080"></div>
<div class="gb1" style="left:15px;top:421px;width:224px;height:147px"></div><div class="gb2" style="left:16px;top:422px;width:224px;height:147px"></div><div class="gbt" style="left:23px;top:416px"><span style='letter-spacing:-0.2px'>Current and last status</span></div><div class="gb1" style="left:15px;top:581px;width:224px;height:67px"></div><div class="gb2" style="left:16px;top:582px;width:224px;height:67px"></div><div class="gbt" style="left:23px;top:576px">Reply</div><div class="gb1" style="left:247px;top:421px;width:224px;height:227px"></div><div class="gb2" style="left:248px;top:422px;width:224px;height:227px"></div><div class="gbt" style="left:255px;top:416px">Statistics</div><div class="gb1" style="left:479px;top:421px;width:444px;height:227px"></div><div class="gb2" style="left:480px;top:422px;width:444px;height:227px"></div><div class="gbt" style="left:487px;top:416px">Test properties</div><div class="lt" style="left:26px;top:438px">Status:</div><div class="lt" style="left:114px;top:438px">Host is alive</div><div class="lt" style="left:26px;top:454px">Iterations</div><div class="lt" style="left:114px;top:454px">10</div><div class="lt" style="left:26px;top:470px">Reply</div><div class="lt" style="left:114px;top:470px">411 ms</div><div class="lt" style="left:26px;top:489px">Last test time</div><div class="lt dt" style="left:114px;top:489px">21/05/2002 04:04:52 PM</div><div class="lt" style="left:26px;top:505px">Last status</div><div class="lt" style="left:114px;top:505px">Host is alive</div><div class="lt" style="left:26px;top:522px">Last reply</div><div class="lt" style="left:114px;top:522px">330 ms</div><div class="lt" style="left:26px;top:543px">Status changed</div><div class="lt dt" style="left:114px;top:543px">21/04/2002 02:42:56 PM</div><div class="lt" style="left:26px;top:594px">Min value:</div><div class="lt" style="left:98px;top:594px">0</div><div class="lt" style="left:26px;top:609px">Max value:</div><div class="lt" style="left:98px;top:609px">1652</div><div class="lt" style="left:26px;top:624px">Average:</div><div class="lt" style="left:98px;top:624px">399</div><div class="lt" style="left:258px;top:437px">Total tests</div><div class="lt" style="left:342px;top:437px">369</div><div class="lt" style="left:258px;top:454px">Passed</div><div class="lt" style="left:342px;top:454px">239 (65 %)</div><div class="lt" style="left:258px;top:471px">Failed</div><div class="lt" style="left:342px;top:471px">130 (35 %)</div><div class="lt" style="left:258px;top:488px">Unknown</div><div class="lt" style="left:342px;top:488px">0 (0 %)</div><div class="lt" style="left:258px;top:511px">Total time</div><div class="lt" style="left:342px;top:511px">2 days 08:27:28</div><div class="lt" style="left:258px;top:528px">"Alive" time</div><div class="lt" style="left:342px;top:528px">1 day 10:40:57 (61%)</div><div class="lt" style="left:258px;top:545px">"Dead" time</div><div class="lt" style="left:342px;top:545px">21:46:31 (39%)</div><div class="lt" style="left:258px;top:562px">"Unknown" time</div><div class="lt" style="left:342px;top:562px">00:00:00 (0%)</div><div class="lt" style="left:258px;top:585px">Status changes</div><div class="lt" style="left:342px;top:585px">35</div><div class="lt" style="left:258px;top:601px">Average: every</div><div class="lt" style="left:342px;top:601px">___</div><div class="lt" style="left:490px;top:437px">Method</div><div class="lt" style="left:562px;top:437px">ping (timeout - 2000 ms)</div><div class="lt" style="left:490px;top:454px">Interval</div><div class="lt" style="left:562px;top:454px">00:10:00</div><div class="lt" style="left:490px;top:471px">Schedule</div><div class="lt" style="left:490px;top:488px">Alert profile</div><div class="lt" style="left:490px;top:511px">Comment</div><div class="lt" style="left:490px;top:528px">Related URL</div><div class="lt" style="left:490px;top:545px">Master test</div><div class="lt" style="left:490px;top:562px">Private log:</div><div class="lt" style="left:490px;top:585px">Created</div><div class="lt dt" style="left:562px;top:585px">26/03/2002 03:39:38 PM</div><div class="lt" style="left:490px;top:601px">Modified</div><div class="lt dt" style="left:562px;top:601px">26/03/2002 03:39:38 PM</div>
<!-- status bar -->
<div style="left:4px;top:662px;width:931px;height:25px;border-top:1px solid #808080;border-left:1px solid #808080;border-right:1px solid #fff;border-bottom:1px solid #fff"></div>
<div style="left:5px;top:664px;height:23px;line-height:23px;color:#000;white-space:pre;letter-spacing:0.3px">Total tests: 51</div>
<div style="left:84px;top:664px;height:23px;line-height:23px;color:#000;white-space:pre;letter-spacing:0.15px">Visible: 60</div>
<div style="left:147px;top:664px;height:23px;line-height:23px;color:#000;white-space:pre;letter-spacing:0px">Click right mouse button for popup menu</div>
<div style="left:919px;top:671px"><svg width="16" height="16" viewBox="0 0 16 16" shape-rendering="crispEdges" style="display:block"><rect x="2" y="15" width="1" height="1" fill="#D4D0C8"/><rect x="3" y="14" width="1" height="1" fill="#FFFFFF"/><rect x="3" y="15" width="1" height="1" fill="#D4D0C8"/><rect x="4" y="13" width="1" height="1" fill="#FFFFFF"/><rect x="4" y="14" width="1" height="1" fill="#808080"/><rect x="4" y="15" width="1" height="1" fill="#D4D0C8"/><rect x="5" y="12" width="1" height="1" fill="#FFFFFF"/><rect x="5" y="13" width="1" height="1" fill="#808080"/><rect x="5" y="14" width="1" height="1" fill="#808080"/><rect x="5" y="15" width="1" height="1" fill="#D4D0C8"/><rect x="6" y="11" width="1" height="1" fill="#FFFFFF"/><rect x="6" y="12" width="1" height="1" fill="#808080"/><rect x="6" y="13" width="1" height="1" fill="#808080"/><rect x="6" y="14" width="1" height="1" fill="#D4D0C8"/><rect x="6" y="15" width="1" height="1" fill="#D4D0C8"/><rect x="7" y="10" width="1" height="1" fill="#FFFFFF"/><rect x="7" y="11" width="1" height="1" fill="#808080"/><rect x="7" y="12" width="1" height="1" fill="#808080"/><rect x="7" y="13" width="1" height="1" fill="#D4D0C8"/><rect x="7" y="14" width="1" height="1" fill="#FFFFFF"/><rect x="7" y="15" width="1" height="1" fill="#D4D0C8"/><rect x="8" y="9" width="1" height="1" fill="#FFFFFF"/><rect x="8" y="10" width="1" height="1" fill="#808080"/><rect x="8" y="11" width="1" height="1" fill="#808080"/><rect x="8" y="12" width="1" height="1" fill="#D4D0C8"/><rect x="8" y="13" width="1" height="1" fill="#FFFFFF"/><rect x="8" y="14" width="1" height="1" fill="#808080"/><rect x="8" y="15" width="1" height="1" fill="#D4D0C8"/><rect x="9" y="8" width="1" height="1" fill="#FFFFFF"/><rect x="9" y="9" width="1" height="1" fill="#808080"/><rect x="9" y="10" width="1" height="1" fill="#808080"/><rect x="9" y="11" width="1" height="1" fill="#D4D0C8"/><rect x="9" y="12" width="1" height="1" fill="#FFFFFF"/><rect x="9" y="13" width="1" height="1" fill="#808080"/><rect x="9" y="14" width="1" height="1" fill="#808080"/><rect x="9" y="15" width="1" height="1" fill="#D4D0C8"/><rect x="10" y="7" width="1" height="1" fill="#FFFFFF"/><rect x="10" y="8" width="1" height="1" fill="#808080"/><rect x="10" y="9" width="1" height="1" fill="#808080"/><rect x="10" y="10" width="1" height="1" fill="#D4D0C8"/><rect x="10" y="11" width="1" height="1" fill="#FFFFFF"/><rect x="10" y="12" width="1" height="1" fill="#808080"/><rect x="10" y="13" width="1" height="1" fill="#808080"/><rect x="10" y="14" width="1" height="1" fill="#D4D0C8"/><rect x="10" y="15" width="1" height="1" fill="#D4D0C8"/><rect x="11" y="6" width="1" height="1" fill="#FFFFFF"/><rect x="11" y="7" width="1" height="1" fill="#808080"/><rect x="11" y="8" width="1" height="1" fill="#808080"/><rect x="11" y="9" width="1" height="1" fill="#D4D0C8"/><rect x="11" y="10" width="1" height="1" fill="#FFFFFF"/><rect x="11" y="11" width="1" height="1" fill="#808080"/><rect x="11" y="12" width="1" height="1" fill="#808080"/><rect x="11" y="13" width="1" height="1" fill="#D4D0C8"/><rect x="11" y="14" width="1" height="1" fill="#FFFFFF"/><rect x="11" y="15" width="1" height="1" fill="#D4D0C8"/><rect x="12" y="5" width="1" height="1" fill="#FFFFFF"/><rect x="12" y="6" width="1" height="1" fill="#808080"/><rect x="12" y="7" width="1" height="1" fill="#808080"/><rect x="12" y="8" width="1" height="1" fill="#D4D0C8"/><rect x="12" y="9" width="1" height="1" fill="#FFFFFF"/><rect x="12" y="10" width="1" height="1" fill="#808080"/><rect x="12" y="11" width="1" height="1" fill="#808080"/><rect x="12" y="12" width="1" height="1" fill="#D4D0C8"/><rect x="12" y="13" width="1" height="1" fill="#FFFFFF"/><rect x="12" y="14" width="1" height="1" fill="#808080"/><rect x="12" y="15" width="1" height="1" fill="#D4D0C8"/><rect x="13" y="4" width="1" height="1" fill="#FFFFFF"/><rect x="13" y="5" width="1" height="1" fill="#808080"/><rect x="13" y="6" width="1" height="1" fill="#808080"/><rect x="13" y="7" width="1" height="1" fill="#D4D0C8"/><rect x="13" y="8" width="1" height="1" fill="#FFFFFF"/><rect x="13" y="9" width="1" height="1" fill="#808080"/><rect x="13" y="10" width="1" height="1" fill="#808080"/><rect x="13" y="11" width="1" height="1" fill="#D4D0C8"/><rect x="13" y="12" width="1" height="1" fill="#FFFFFF"/><rect x="13" y="13" width="1" height="1" fill="#808080"/><rect x="13" y="14" width="1" height="1" fill="#808080"/><rect x="13" y="15" width="1" height="1" fill="#D4D0C8"/><rect x="14" y="3" width="1" height="1" fill="#FFFFFF"/><rect x="14" y="4" width="1" height="1" fill="#808080"/><rect x="14" y="5" width="1" height="1" fill="#808080"/><rect x="14" y="6" width="1" height="1" fill="#D4D0C8"/><rect x="14" y="7" width="1" height="1" fill="#FFFFFF"/><rect x="14" y="8" width="1" height="1" fill="#808080"/><rect x="14" y="9" width="1" height="1" fill="#808080"/><rect x="14" y="10" width="1" height="1" fill="#D4D0C8"/><rect x="14" y="11" width="1" height="1" fill="#FFFFFF"/><rect x="14" y="12" width="1" height="1" fill="#808080"/><rect x="14" y="13" width="1" height="1" fill="#808080"/><rect x="14" y="14" width="1" height="1" fill="#D4D0C8"/><rect x="14" y="15" width="1" height="1" fill="#D4D0C8"/><rect x="15" y="2" width="1" height="1" fill="#D4D0C8"/><rect x="15" y="3" width="1" height="1" fill="#D4D0C8"/><rect x="15" y="4" width="1" height="1" fill="#D4D0C8"/><rect x="15" y="5" width="1" height="1" fill="#D4D0C8"/><rect x="15" y="6" width="1" height="1" fill="#D4D0C8"/><rect x="15" y="7" width="1" height="1" fill="#D4D0C8"/><rect x="15" y="8" width="1" height="1" fill="#D4D0C8"/><rect x="15" y="9" width="1" height="1" fill="#D4D0C8"/><rect x="15" y="10" width="1" height="1" fill="#D4D0C8"/><rect x="15" y="11" width="1" height="1" fill="#D4D0C8"/><rect x="15" y="12" width="1" height="1" fill="#D4D0C8"/><rect x="15" y="13" width="1" height="1" fill="#D4D0C8"/><rect x="15" y="14" width="1" height="1" fill="#D4D0C8"/><rect x="15" y="15" width="1" height="1" fill="#D4D0C8"/></svg></div>
</body></html>
